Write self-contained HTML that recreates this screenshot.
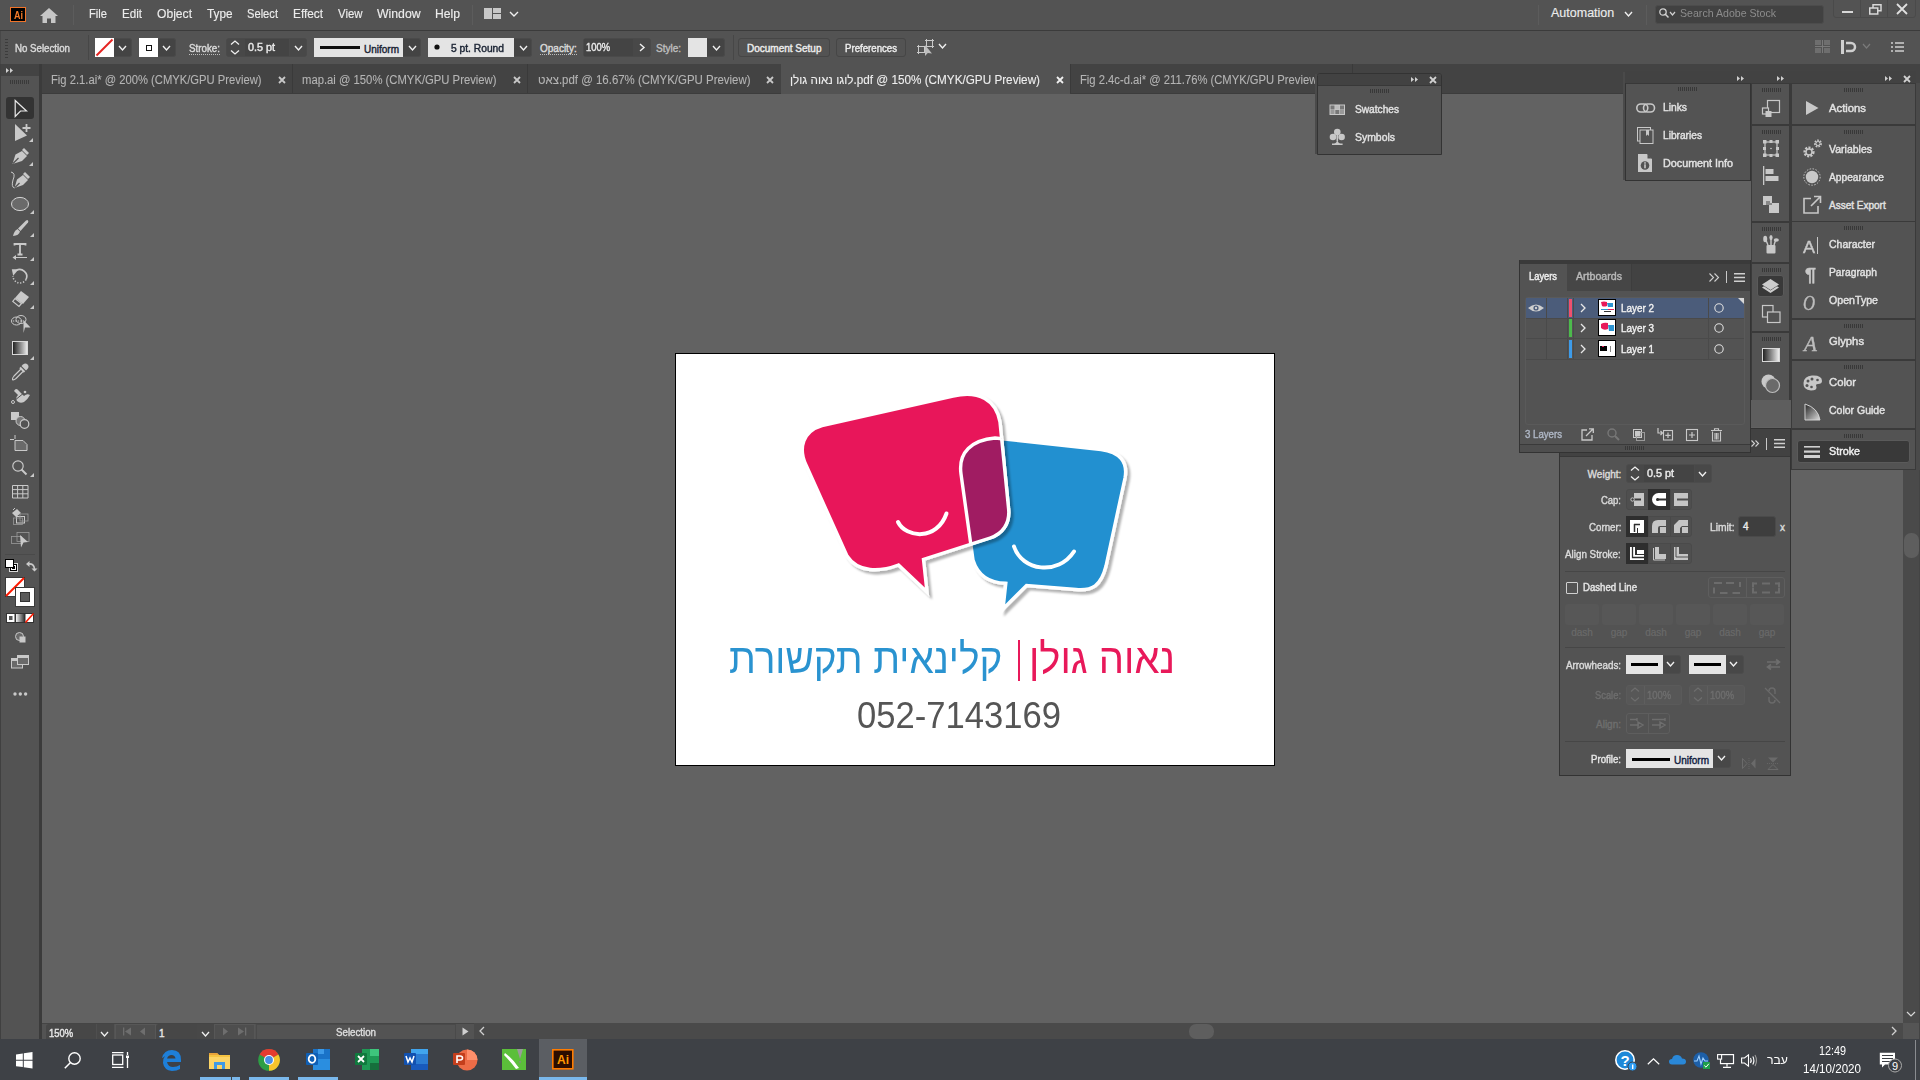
<!DOCTYPE html>
<html><head><meta charset="utf-8">
<style>
*{margin:0;padding:0;box-sizing:border-box}
html,body{width:1920px;height:1080px;overflow:hidden;background:#626262;font-family:"Liberation Sans",sans-serif;position:relative}
.a{position:absolute}
.t{position:absolute;white-space:nowrap;line-height:1;-webkit-text-stroke:0.4px currentColor}
.nb{-webkit-text-stroke:0}
svg{position:absolute;overflow:visible}
</style></head><body>

<div class="a" style="left:0px;top:0px;width:1920px;height:30px;background:#535353;"></div>
<div class="a" style="left:0px;top:30px;width:1920px;height:1px;background:#3b3b3b;"></div>
<div class="a" style="left:10px;top:7px;width:16px;height:15px;background:#000000;border:1.5px solid #f0742a;"></div>
<div class="t" style="left:13.50px;top:10.54px;font-size:10px;color:#f57c2a;font-weight:700;transform:scaleX(0.9000);transform-origin:0 0;-webkit-text-stroke:0;">Ai</div>
<svg style="left:40px;top:8px;" width="18" height="16" viewBox="0 0 18 16"><path d="M9 0 L18 8 L15.5 8 L15.5 15 L11 15 L11 10.5 L7 10.5 L7 15 L2.5 15 L2.5 8 L0 8 Z" fill="#c6c6c6"/></svg>
<div class="a" style="left:73px;top:5px;width:1px;height:20px;background:#5c5c5c;"></div>
<div class="t" style="left:89.00px;top:7.92px;font-size:12.5px;color:#ececec;font-weight:400;transform:scaleX(0.8937);transform-origin:0 0;-webkit-text-stroke:0.15px currentColor;">File</div>
<div class="t" style="left:122.00px;top:7.92px;font-size:12.5px;color:#ececec;font-weight:400;transform:scaleX(0.9285);transform-origin:0 0;-webkit-text-stroke:0.15px currentColor;">Edit</div>
<div class="t" style="left:157.00px;top:7.92px;font-size:12.5px;color:#ececec;font-weight:400;transform:scaleX(0.9688);transform-origin:0 0;-webkit-text-stroke:0.15px currentColor;">Object</div>
<div class="t" style="left:207.00px;top:7.92px;font-size:12.5px;color:#ececec;font-weight:400;transform:scaleX(0.9410);transform-origin:0 0;-webkit-text-stroke:0.15px currentColor;">Type</div>
<div class="t" style="left:247.00px;top:7.92px;font-size:12.5px;color:#ececec;font-weight:400;transform:scaleX(0.8923);transform-origin:0 0;-webkit-text-stroke:0.15px currentColor;">Select</div>
<div class="t" style="left:293.00px;top:7.92px;font-size:12.5px;color:#ececec;font-weight:400;transform:scaleX(0.9454);transform-origin:0 0;-webkit-text-stroke:0.15px currentColor;">Effect</div>
<div class="t" style="left:338.00px;top:7.92px;font-size:12.5px;color:#ececec;font-weight:400;transform:scaleX(0.9119);transform-origin:0 0;-webkit-text-stroke:0.15px currentColor;">View</div>
<div class="t" style="left:377.00px;top:7.92px;font-size:12.5px;color:#ececec;font-weight:400;transform:scaleX(0.9807);transform-origin:0 0;-webkit-text-stroke:0.15px currentColor;">Window</div>
<div class="t" style="left:435.00px;top:7.92px;font-size:12.5px;color:#ececec;font-weight:400;transform:scaleX(0.9725);transform-origin:0 0;-webkit-text-stroke:0.15px currentColor;">Help</div>
<div class="a" style="left:472px;top:5px;width:1px;height:20px;background:#5c5c5c;"></div>
<svg style="left:484px;top:8px;" width="18" height="12" viewBox="0 0 18 12"><rect x="0" y="0" width="8" height="11" fill="#c8c8c8"/><rect x="9" y="0" width="8" height="5" fill="#c8c8c8"/><rect x="9" y="6" width="8" height="5" fill="#c8c8c8"/></svg>
<svg style="left:508.5px;top:10.5px;" width="10" height="6" viewBox="0 0 10 6"><path d="M1 1 L5.0 5 L9 1" fill="none" stroke="#f0f0f0" stroke-width="1.4"/></svg>
<div class="a" style="left:1538px;top:5px;width:1px;height:20px;background:#5c5c5c;"></div>
<div class="t" style="left:1551.00px;top:7.42px;font-size:12.5px;color:#ececec;font-weight:400;-webkit-text-stroke:0.15px currentColor;">Automation</div>
<svg style="left:1624px;top:11px;" width="9" height="6" viewBox="0 0 9 6"><path d="M1 1 L4.5 5 L8 1" fill="none" stroke="#f0f0f0" stroke-width="1.4"/></svg>
<div class="a" style="left:1646px;top:5px;width:1px;height:20px;background:#5c5c5c;"></div>
<div class="a" style="left:1655px;top:5px;width:169px;height:19px;background:#414141;border:1px solid #4c4c4c;border-radius:3px;"></div>
<svg style="left:1659px;top:8px;" width="10" height="11" viewBox="0 0 10 11"><circle cx="4" cy="4" r="3.2" fill="none" stroke="#d0d0d0" stroke-width="1.3"/><path d="M6.3 6.3 L9.5 9.5" stroke="#d0d0d0" stroke-width="1.5"/></svg>
<svg style="left:1669px;top:11px;" width="7" height="5" viewBox="0 0 7 5"><path d="M1 1 L3.5 4 L6 1" fill="none" stroke="#d0d0d0" stroke-width="1.2"/></svg>
<div class="t" style="left:1680.00px;top:8.27px;font-size:11.5px;color:#8c8c8c;font-weight:400;transform:scaleX(0.9213);transform-origin:0 0;-webkit-text-stroke:0;">Search Adobe Stock</div>
<div class="a" style="left:1833px;top:-2px;width:83px;height:20px;background:#535353;border:1px solid #4a4a4a;border-radius:0 0 3px 3px;"></div>
<div class="a" style="left:1860px;top:0px;width:1px;height:17px;background:#4a4a4a;"></div>
<div class="a" style="left:1887px;top:0px;width:1px;height:17px;background:#4a4a4a;"></div>
<div class="a" style="left:1842px;top:11px;width:11px;height:2px;background:#d8d8d8;"></div>
<svg style="left:1869px;top:4px;" width="13" height="11" viewBox="0 0 13 11"><rect x="4" y="0.75" width="8" height="6" fill="none" stroke="#d8d8d8" stroke-width="1.5"/><rect x="0.75" y="4" width="8" height="6" fill="#535353" stroke="#d8d8d8" stroke-width="1.5"/></svg>
<svg style="left:1897px;top:4px;" width="10" height="10" viewBox="0 0 10 10"><path d="M0 0 L10 10 M10 0 L0 10" stroke="#e0e0e0" stroke-width="1.8"/></svg>
<div class="a" style="left:0px;top:31px;width:1920px;height:33px;background:#535353;"></div>
<div class="a" style="left:0px;top:31px;width:1px;height:33px;background:#484848;"></div>
<div class="a" style="left:5px;top:39px;width:3px;height:1px;background:#3c3c3c;"></div>
<div class="a" style="left:5px;top:42px;width:3px;height:1px;background:#3c3c3c;"></div>
<div class="a" style="left:5px;top:45px;width:3px;height:1px;background:#3c3c3c;"></div>
<div class="a" style="left:5px;top:48px;width:3px;height:1px;background:#3c3c3c;"></div>
<div class="a" style="left:5px;top:51px;width:3px;height:1px;background:#3c3c3c;"></div>
<div class="a" style="left:5px;top:54px;width:3px;height:1px;background:#3c3c3c;"></div>
<div class="a" style="left:5px;top:57px;width:3px;height:1px;background:#3c3c3c;"></div>
<div class="t" style="left:15.00px;top:43.53px;font-size:10px;color:#dadada;font-weight:400;transform:scaleX(0.9701);transform-origin:0 0;">No Selection</div>
<div class="a" style="left:88px;top:35px;width:1px;height:25px;background:#474747;"></div>
<div class="a" style="left:95px;top:38px;width:19px;height:19px;background:#ffffff;"></div>
<svg style="left:95px;top:38px" width="19" height="19"><path d="M1.5 17.5 L17.5 1.5" stroke="#e52421" stroke-width="2"/></svg>
<div class="a" style="left:114px;top:38px;width:18px;height:19px;background:#444444;border-radius:0 3px 3px 0;border:1px solid #4a4a4a;border-left:none;"></div>
<svg style="left:118px;top:44.5px;" width="9" height="6" viewBox="0 0 9 6"><path d="M1 1 L4.5 5 L8 1" fill="none" stroke="#f0f0f0" stroke-width="1.4"/></svg>
<div class="a" style="left:139px;top:38px;width:19px;height:19px;background:#ffffff;"></div>
<div class="a" style="left:146px;top:45px;width:6px;height:6px;border:1.3px solid #111"></div>
<div class="a" style="left:158px;top:38px;width:18px;height:19px;background:#444444;border-radius:0 3px 3px 0;border:1px solid #4a4a4a;border-left:none;"></div>
<svg style="left:162px;top:44.5px;" width="9" height="6" viewBox="0 0 9 6"><path d="M1 1 L4.5 5 L8 1" fill="none" stroke="#f0f0f0" stroke-width="1.4"/></svg>
<div class="t" style="left:189.00px;top:43.53px;font-size:10px;color:#dadada;font-weight:400;transform:scaleX(0.9786);transform-origin:0 0;">Stroke:</div>
<svg style="left:189px;top:54px;" width="31" height="1" viewBox="0 0 31 1"><rect x="0" y="0" width="1" height="1" fill="#bdbdbd"/><rect x="2" y="0" width="1" height="1" fill="#bdbdbd"/><rect x="4" y="0" width="1" height="1" fill="#bdbdbd"/><rect x="6" y="0" width="1" height="1" fill="#bdbdbd"/><rect x="8" y="0" width="1" height="1" fill="#bdbdbd"/><rect x="10" y="0" width="1" height="1" fill="#bdbdbd"/><rect x="12" y="0" width="1" height="1" fill="#bdbdbd"/><rect x="14" y="0" width="1" height="1" fill="#bdbdbd"/><rect x="16" y="0" width="1" height="1" fill="#bdbdbd"/><rect x="18" y="0" width="1" height="1" fill="#bdbdbd"/><rect x="20" y="0" width="1" height="1" fill="#bdbdbd"/><rect x="22" y="0" width="1" height="1" fill="#bdbdbd"/><rect x="24" y="0" width="1" height="1" fill="#bdbdbd"/><rect x="26" y="0" width="1" height="1" fill="#bdbdbd"/><rect x="28" y="0" width="1" height="1" fill="#bdbdbd"/><rect x="30" y="0" width="1" height="1" fill="#bdbdbd"/></svg>
<div class="a" style="left:226px;top:38px;width:81px;height:19px;background:#484848;border:1px solid #4a4a4a;border-radius:3px;"></div>
<svg style="left:230px;top:40px;" width="10" height="15" viewBox="0 0 10 15"><path d="M1 4.5 L5 1 L9 4.5 M1 10.5 L5 14 L9 10.5" fill="none" stroke="#f0f0f0" stroke-width="1.3"/></svg>
<div class="a" style="left:245px;top:39px;width:44px;height:17px;background:#444444;"></div>
<div class="t" style="left:248.00px;top:43.03px;font-size:10px;color:#e8e8e8;font-weight:400;transform:scaleX(1.0793);transform-origin:0 0;">0.5 pt</div>
<div class="a" style="left:289px;top:39px;width:1px;height:17px;background:#4a4a4a;"></div>
<svg style="left:293.5px;top:44.5px;" width="9" height="6" viewBox="0 0 9 6"><path d="M1 1 L4.5 5 L8 1" fill="none" stroke="#f0f0f0" stroke-width="1.4"/></svg>
<div class="a" style="left:314px;top:38px;width:89px;height:19px;background:#e4e4e4;"></div>
<div class="a" style="left:320px;top:46px;width:40px;height:3px;background:#111;"></div>
<div class="t" style="left:364.00px;top:44.53px;font-size:10px;color:#1a2333;font-weight:400;">Uniform</div>
<div class="a" style="left:403px;top:38px;width:18px;height:19px;background:#444444;border:1px solid #4a4a4a;border-left:none;border-radius:0 3px 3px 0;"></div>
<svg style="left:407.5px;top:44.5px;" width="9" height="6" viewBox="0 0 9 6"><path d="M1 1 L4.5 5 L8 1" fill="none" stroke="#f0f0f0" stroke-width="1.4"/></svg>
<div class="a" style="left:428px;top:38px;width:86px;height:19px;background:#e4e4e4;"></div>
<svg style="left:434px;top:44px;" width="6" height="6" viewBox="0 0 6 6"><circle cx="3" cy="3" r="2.6" fill="#111"/></svg>
<div class="t" style="left:451.00px;top:44.03px;font-size:10px;color:#1a2333;font-weight:400;transform:scaleX(1.0251);transform-origin:0 0;">5 pt. Round</div>
<div class="a" style="left:514px;top:38px;width:18px;height:19px;background:#444444;border:1px solid #4a4a4a;border-left:none;border-radius:0 3px 3px 0;"></div>
<svg style="left:518.5px;top:44.5px;" width="9" height="6" viewBox="0 0 9 6"><path d="M1 1 L4.5 5 L8 1" fill="none" stroke="#f0f0f0" stroke-width="1.4"/></svg>
<div class="t" style="left:540.00px;top:43.53px;font-size:10px;color:#dadada;font-weight:400;">Opacity:</div>
<svg style="left:540px;top:54px;" width="37" height="1" viewBox="0 0 37 1"><rect x="0" y="0" width="1" height="1" fill="#bdbdbd"/><rect x="2" y="0" width="1" height="1" fill="#bdbdbd"/><rect x="4" y="0" width="1" height="1" fill="#bdbdbd"/><rect x="6" y="0" width="1" height="1" fill="#bdbdbd"/><rect x="8" y="0" width="1" height="1" fill="#bdbdbd"/><rect x="10" y="0" width="1" height="1" fill="#bdbdbd"/><rect x="12" y="0" width="1" height="1" fill="#bdbdbd"/><rect x="14" y="0" width="1" height="1" fill="#bdbdbd"/><rect x="16" y="0" width="1" height="1" fill="#bdbdbd"/><rect x="18" y="0" width="1" height="1" fill="#bdbdbd"/><rect x="20" y="0" width="1" height="1" fill="#bdbdbd"/><rect x="22" y="0" width="1" height="1" fill="#bdbdbd"/><rect x="24" y="0" width="1" height="1" fill="#bdbdbd"/><rect x="26" y="0" width="1" height="1" fill="#bdbdbd"/><rect x="28" y="0" width="1" height="1" fill="#bdbdbd"/><rect x="30" y="0" width="1" height="1" fill="#bdbdbd"/><rect x="32" y="0" width="1" height="1" fill="#bdbdbd"/><rect x="34" y="0" width="1" height="1" fill="#bdbdbd"/><rect x="36" y="0" width="1" height="1" fill="#bdbdbd"/></svg>
<div class="a" style="left:583px;top:38px;width:68px;height:19px;background:#484848;border:1px solid #4a4a4a;border-radius:3px;"></div>
<div class="a" style="left:584px;top:39px;width:49px;height:17px;background:#444444;"></div>
<div class="t" style="left:586.00px;top:43.03px;font-size:10px;color:#e8e8e8;font-weight:400;transform:scaleX(0.9384);transform-origin:0 0;">100%</div>
<svg style="left:639px;top:43px;" width="6" height="9" viewBox="0 0 6 9"><path d="M1 1 L5 4.5 L1 8" fill="none" stroke="#f0f0f0" stroke-width="1.4"/></svg>
<div class="t" style="left:656.00px;top:43.53px;font-size:10px;color:#bdbdbd;font-weight:400;">Style:</div>
<div class="a" style="left:688px;top:38px;width:19px;height:19px;background:#e4e4e4;"></div>
<div class="a" style="left:707px;top:38px;width:18px;height:19px;background:#444444;border:1px solid #4a4a4a;border-left:none;border-radius:0 3px 3px 0;"></div>
<svg style="left:711.5px;top:44.5px;" width="9" height="6" viewBox="0 0 9 6"><path d="M1 1 L4.5 5 L8 1" fill="none" stroke="#f0f0f0" stroke-width="1.4"/></svg>
<div class="a" style="left:733px;top:35px;width:1px;height:25px;background:#474747;"></div>
<div class="a" style="left:738px;top:38px;width:92px;height:19px;background:#535353;border:1px solid #464646;border-radius:3px;"></div>
<div class="t" style="left:747.00px;top:44.03px;font-size:10px;color:#ececec;font-weight:400;">Document Setup</div>
<div class="a" style="left:836px;top:38px;width:70px;height:19px;background:#535353;border:1px solid #464646;border-radius:3px;"></div>
<div class="t" style="left:845.00px;top:44.03px;font-size:10px;color:#ececec;font-weight:400;transform:scaleX(0.9645);transform-origin:0 0;">Preferences</div>
<svg style="left:917px;top:39px;" width="17" height="17" viewBox="0 0 17 17"><rect x="1.5" y="7.5" width="6" height="6" fill="none" stroke="#c8c8c8" stroke-width="1"/><rect x="9.5" y="1.5" width="6" height="6" fill="none" stroke="#c8c8c8" stroke-width="1"/><path d="M0 7.5 H2 M1.5 6 V8 M0 13.5 H2 M1.5 13 V15 M9.5 0 V2 M8 1.5 H10 M15.5 0 V2 M15 1.5 H17 M15.5 7 V9 M15 7.5 H17" stroke="#c8c8c8" stroke-width="1"/><path d="M8 6 L8 17 L10.8 14 L15 14.5 Z" fill="#bdbdbd"/></svg>
<svg style="left:937.5px;top:43px;" width="9" height="6" viewBox="0 0 9 6"><path d="M1 1 L4.5 5 L8 1" fill="none" stroke="#f0f0f0" stroke-width="1.4"/></svg>
<svg style="left:1815px;top:40px;" width="16" height="13" viewBox="0 0 16 13"><rect x="0" y="0" width="6" height="5" fill="#6e6e6e"/><rect x="9" y="0" width="6" height="5" fill="#6e6e6e"/><rect x="0" y="8" width="6" height="5" fill="#6e6e6e"/><rect x="9" y="8" width="6" height="5" fill="#6e6e6e"/><rect x="7" y="0" width="1" height="13" fill="#7a7a7a"/><rect x="0" y="6" width="15" height="1" fill="#7a7a7a"/></svg>
<svg style="left:1841px;top:40px;" width="16" height="14" viewBox="0 0 16 14"><rect x="0" y="0" width="3" height="14" fill="#cfcfcf"/><path d="M5 3 L10 3 A4 4 0 0 1 10 11 L5 11" fill="none" stroke="#cfcfcf" stroke-width="2.5"/></svg>
<svg style="left:1862px;top:43px;" width="9" height="6" viewBox="0 0 9 6"><path d="M1 1 L4.5 5 L8 1" fill="none" stroke="#7a7a7a" stroke-width="1.2"/></svg>
<svg style="left:1891px;top:42px;" width="13" height="10" viewBox="0 0 13 10"><path d="M0 1 H2 M0 5 H2 M0 9 H2 M4 1 H13 M4 5 H13 M4 9 H13" stroke="#d0d0d0" stroke-width="1.5"/></svg>
<div class="a" style="left:42px;top:64px;width:1878px;height:30px;background:#434343;"></div>
<div class="a" style="left:42px;top:93px;width:1878px;height:1px;background:#3c3c3c;"></div>
<div class="t" style="left:51.00px;top:73.84px;font-size:12px;color:#b4b4b4;font-weight:400;transform:scaleX(0.9359);transform-origin:0 0;-webkit-text-stroke:0.1px currentColor;">Fig 2.1.ai* @ 200% (CMYK/GPU Preview)</div>
<svg style="left:279px;top:77px;" width="6" height="6" viewBox="0 0 6 6"><path d="M0 0 L6 6 M6 0 L0 6" stroke="#c8c8c8" stroke-width="1.8"/></svg>
<div class="a" style="left:292px;top:64px;width:1px;height:29px;background:#3a3a3a;"></div>
<div class="t" style="left:302.00px;top:73.84px;font-size:12px;color:#b4b4b4;font-weight:400;transform:scaleX(0.9400);transform-origin:0 0;-webkit-text-stroke:0.1px currentColor;">map.ai @ 150% (CMYK/GPU Preview)</div>
<svg style="left:514px;top:77px;" width="6" height="6" viewBox="0 0 6 6"><path d="M0 0 L6 6 M6 0 L0 6" stroke="#c8c8c8" stroke-width="1.8"/></svg>
<div class="a" style="left:527px;top:64px;width:1px;height:29px;background:#3a3a3a;"></div>
<div class="t" style="left:537.50px;top:73.84px;font-size:12px;color:#b4b4b4;font-weight:400;transform:scaleX(0.9537);transform-origin:0 0;-webkit-text-stroke:0.1px currentColor;">צאט.pdf @ 16.67% (CMYK/GPU Preview)</div>
<svg style="left:767px;top:77px;" width="6" height="6" viewBox="0 0 6 6"><path d="M0 0 L6 6 M6 0 L0 6" stroke="#c8c8c8" stroke-width="1.8"/></svg>
<div class="a" style="left:781px;top:64px;width:1px;height:29px;background:#3a3a3a;"></div>
<div class="a" style="left:781px;top:64px;width:289px;height:30px;background:#535353;"></div>
<div class="t" style="left:790.00px;top:73.84px;font-size:12px;color:#eeeeee;font-weight:400;transform:scaleX(0.9772);transform-origin:0 0;-webkit-text-stroke:0.1px currentColor;">‎לוגו נאוה גולן.pdf @ 150% (CMYK/GPU Preview)</div>
<svg style="left:1057px;top:77px;" width="6" height="6" viewBox="0 0 6 6"><path d="M0 0 L6 6 M6 0 L0 6" stroke="#f0f0f0" stroke-width="1.8"/></svg>
<div class="a" style="left:1070px;top:64px;width:1px;height:29px;background:#3a3a3a;"></div>
<div class="a" style="left:1070px;top:64px;width:248px;height:29px;overflow:hidden">
<div class="t" style="left:10.00px;top:9.84px;font-size:12px;color:#b4b4b4;font-weight:400;transform:scaleX(0.9363);transform-origin:0 0;-webkit-text-stroke:0.1px currentColor;">Fig 2.4c-d.ai* @ 211.76% (CMYK/GPU Preview)</div>
</div>
<div class="a" style="left:1352px;top:64px;width:1px;height:9px;background:#3a3a3a;"></div>
<div class="a" style="left:0px;top:64px;width:39px;height:975px;background:#535353;"></div>
<div class="a" style="left:0px;top:64px;width:39px;height:12px;background:#434343;"></div>
<div class="a" style="left:0px;top:64px;width:1px;height:975px;background:#404040;"></div>
<svg style="left:6px;top:68px;" width="8" height="5" viewBox="0 0 8 5"><path d="M0 0 L3 2.5 L0 5 Z M4 0 L7 2.5 L4 5 Z" fill="#d0d0d0"/></svg>
<div class="a" style="left:39px;top:64px;width:3px;height:975px;background:#3b3b3b;"></div>
<svg style="left:10px;top:80px;" width="20" height="4" viewBox="0 0 20 4"><rect x="0" y="0" width="1" height="4" fill="#3a3a3a"/><rect x="2" y="0" width="1" height="4" fill="#3a3a3a"/><rect x="4" y="0" width="1" height="4" fill="#3a3a3a"/><rect x="6" y="0" width="1" height="4" fill="#3a3a3a"/><rect x="8" y="0" width="1" height="4" fill="#3a3a3a"/><rect x="10" y="0" width="1" height="4" fill="#3a3a3a"/><rect x="12" y="0" width="1" height="4" fill="#3a3a3a"/><rect x="14" y="0" width="1" height="4" fill="#3a3a3a"/><rect x="16" y="0" width="1" height="4" fill="#3a3a3a"/><rect x="18" y="0" width="1" height="4" fill="#3a3a3a"/></svg>
<div class="a" style="left:6px;top:97px;width:28px;height:22px;background:#333333;border-radius:3px;"></div>
<svg style="left:14px;top:99px;" width="14" height="19" viewBox="0 0 14 19"><path d="M1.2 1.5 L12.5 12 L6.5 12 L1.2 17.5 Z" fill="none" stroke="#e8e8e8" stroke-width="1.2" stroke-linejoin="miter"/></svg>
<svg style="left:14px;top:123px;" width="18" height="19" viewBox="0 0 18 19"><path d="M1 1 L13 12.5 L1 18 Z" fill="#c9c9c9"/><path d="M8.5 5 H16.5 M12.5 1 V9" stroke="#c9c9c9" stroke-width="1.8"/></svg>
<svg style="left:29px;top:138px;" width="4" height="4" viewBox="0 0 4 4"><path d="M4 0 L4 4 L0 4 Z" fill="#c9c9c9"/></svg>
<svg style="left:11px;top:147px;" width="18" height="18" viewBox="0 0 18 18"><path d="M11 4 L16 9 L11 14 L1.5 17 L4.5 7.5 Z" fill="#c9c9c9"/><path d="M13 1 L18 6 L16 8 L11 3 Z" fill="#c9c9c9"/><path d="M2 16.5 L7.5 11" stroke="#535353" stroke-width="1.2"/></svg>
<svg style="left:29px;top:162px;" width="4" height="4" viewBox="0 0 4 4"><path d="M4 0 L4 4 L0 4 Z" fill="#c9c9c9"/></svg>
<svg style="left:10px;top:171px;" width="20" height="19" viewBox="0 0 20 19"><path d="M13 4 L18 9 L13 14 L4.5 17 L7 8.5 Z" fill="#c9c9c9"/><path d="M15 1 L20 6 L18 8 L13 3 Z" fill="#c9c9c9"/><path d="M1 1 Q6 2 3 9 Q1 16 4.5 17" fill="none" stroke="#c9c9c9" stroke-width="1"/><path d="M5 16.5 L9.5 12" stroke="#535353" stroke-width="1.2"/></svg>
<svg style="left:11px;top:197px;" width="19" height="15" viewBox="0 0 19 15"><ellipse cx="9" cy="7" rx="8.5" ry="6.6" fill="#6a6a6a" stroke="#d4d4d4" stroke-width="1"/></svg>
<svg style="left:29.5px;top:210px;" width="4" height="4" viewBox="0 0 4 4"><path d="M4 0 L4 4 L0 4 Z" fill="#c9c9c9"/></svg>
<svg style="left:12px;top:219px;" width="17" height="18" viewBox="0 0 17 18"><path d="M15.5 1 Q17 2 16 3.5 L8.5 12 L6 9.5 L14 1.5 Z" fill="#c9c9c9"/><path d="M5.5 10 L8 12.5 Q7 16.5 1 17 Q2 12 5.5 10 Z" fill="#c9c9c9"/></svg>
<svg style="left:29.5px;top:233px;" width="4" height="4" viewBox="0 0 4 4"><path d="M4 0 L4 4 L0 4 Z" fill="#c9c9c9"/></svg>
<svg style="left:12px;top:243px;" width="16" height="16" viewBox="0 0 16 16"><path d="M2.5 2.5 V1 H13.5 V2.5 M8 1 V11.5 M5.5 11.5 H10.5" fill="none" stroke="#c9c9c9" stroke-width="1.8"/><path d="M4 14.5 H15" stroke="#c9c9c9" stroke-width="1"/><path d="M0.5 14.5 L4 12 L4 17 Z" fill="#c9c9c9"/></svg>
<svg style="left:29.5px;top:257px;" width="4" height="4" viewBox="0 0 4 4"><path d="M4 0 L4 4 L0 4 Z" fill="#c9c9c9"/></svg>
<svg style="left:10px;top:266px;" width="20" height="20" viewBox="0 0 20 20"><path d="M6 4.6 A7 7 0 0 1 16.06 13.5" fill="none" stroke="#c9c9c9" stroke-width="1.7"/><path d="M16.06 13.5 A7 7 0 0 1 3 10" fill="none" stroke="#c9c9c9" stroke-width="1.5" stroke-dasharray="1.3 1.6"/><path d="M1.8 3.2 L8.6 3.2 L3.2 9.8 Z" fill="#c9c9c9"/></svg>
<svg style="left:29.5px;top:281px;" width="4" height="4" viewBox="0 0 4 4"><path d="M4 0 L4 4 L0 4 Z" fill="#c9c9c9"/></svg>
<svg style="left:12px;top:290px;" width="18" height="17" viewBox="0 0 18 17"><path d="M9 1 L17 7 L11 14 L3 8 Z" fill="#c9c9c9"/><path d="M3 8.5 L9.5 13.5 L7 16.5 L0.8 11.5 Z" fill="none" stroke="#c9c9c9" stroke-width="1.2"/></svg>
<svg style="left:29.5px;top:305px;" width="4" height="4" viewBox="0 0 4 4"><path d="M4 0 L4 4 L0 4 Z" fill="#c9c9c9"/></svg>
<svg style="left:11px;top:315px;" width="21" height="18" viewBox="0 0 21 18"><ellipse cx="5.5" cy="6" rx="5" ry="4" fill="none" stroke="#c9c9c9" stroke-width="1"/><ellipse cx="10" cy="4.5" rx="5" ry="4" fill="none" stroke="#c9c9c9" stroke-width="1"/><path d="M2 6 H13" stroke="#c9c9c9" stroke-width="1.2" stroke-dasharray="1.2 1.2"/><path d="M12.5 5 L19.5 12.5 L14 12.5 L12.5 18 Z" fill="#c9c9c9"/></svg>
<div class="a" style="left:12px;top:341px;width:16px;height:14px;border:1px solid #d8d8d8;background:linear-gradient(90deg,#222,#e8e8e8)"></div>
<svg style="left:29.5px;top:356px;" width="4" height="4" viewBox="0 0 4 4"><path d="M4 0 L4 4 L0 4 Z" fill="#c9c9c9"/></svg>
<svg style="left:11px;top:363px;" width="18" height="18" viewBox="0 0 18 18"><path d="M12 1.5 Q14.5 -0.5 16.5 1.5 Q18.5 3.5 16.5 6 L15 7.5 L10.5 3 Z" fill="#c9c9c9"/><path d="M9 4.5 L13.5 9" stroke="#c9c9c9" stroke-width="2"/><path d="M10 6 L3 13 Q1 15.5 1.5 16.5 Q2.5 17.5 5 15.5 L12 8.5" fill="none" stroke="#c9c9c9" stroke-width="1.2"/></svg>
<svg style="left:11px;top:388px;" width="20" height="16" viewBox="0 0 20 16"><path d="M3 3 Q5 -1 8 3 L13 8 Q16 5 19 7 Q17 11 13 14 Q9 16 6 13 Q4 10 7 7 Q5 5 3 3 Z" fill="#c9c9c9"/><circle cx="2" cy="14" r="1.5" fill="none" stroke="#c9c9c9"/><path d="M3 13 L14 4" stroke="#535353" stroke-width="1"/><circle cx="14" cy="4" r="1.3" fill="#c9c9c9"/></svg>
<svg style="left:11px;top:412px;" width="19" height="16" viewBox="0 0 19 16"><rect x="0" y="0" width="8" height="8" fill="#c9c9c9"/><circle cx="9.5" cy="9" r="4.5" fill="#777" stroke="#c9c9c9" stroke-width="1"/><circle cx="13.5" cy="12" r="4.3" fill="#535353" stroke="#c9c9c9" stroke-width="1.2"/></svg>
<svg style="left:10px;top:435px;" width="18" height="16" viewBox="0 0 18 16"><path d="M5 0 V4 M0 4.5 H4" stroke="#c9c9c9" stroke-width="1"/><path d="M5 5.5 H13 L17 9.5 V15.5 H5 Z" fill="#6a6a6a" stroke="#c9c9c9" stroke-width="1"/></svg>
<svg style="left:12px;top:460px;" width="19" height="17" viewBox="0 0 19 17"><circle cx="6" cy="6" r="5.2" fill="none" stroke="#c9c9c9" stroke-width="1.2"/><path d="M9.5 9.5 L14.5 14.5" stroke="#c9c9c9" stroke-width="2"/></svg>
<svg style="left:29.5px;top:473px;" width="4" height="4" viewBox="0 0 4 4"><path d="M4 0 L4 4 L0 4 Z" fill="#c9c9c9"/></svg>
<svg style="left:12px;top:485px;" width="17" height="14" viewBox="0 0 17 14"><path d="M0.5 0.5 H16 V13 H0.5 Z M0.5 4.6 H16 M0.5 8.8 H16 M5.6 0.5 V13 M10.8 0.5 V13" fill="none" stroke="#c9c9c9" stroke-width="1"/></svg>
<svg style="left:11px;top:508px;" width="19" height="17" viewBox="0 0 19 17"><path d="M1 5 L6 1 L10 5 L5 9 Z" fill="#c9c9c9"/><path d="M2 2 L4 0" stroke="#c9c9c9" stroke-width="1"/><rect x="5.5" y="8.5" width="8" height="6.5" fill="none" stroke="#c9c9c9" stroke-width="1"/><rect x="9" y="6" width="8" height="7" fill="none" stroke="#9a9a9a" stroke-width="0.8"/><rect x="2.5" y="10" width="9" height="6.5" fill="none" stroke="#9a9a9a" stroke-width="0.8"/></svg>
<svg style="left:11px;top:532px;" width="19" height="17" viewBox="0 0 19 17"><rect x="0.5" y="4.5" width="10" height="7" fill="none" stroke="#9a9a9a" stroke-width="0.8"/><rect x="6" y="0.5" width="12" height="9" fill="none" stroke="#9a9a9a" stroke-width="0.8"/><path d="M9 3 L17 10 L12.5 10.5 L10 15.5 Z" fill="#c9c9c9"/></svg>
<div class="a" style="left:5px;top:554px;width:30px;height:1px;background:#4a4a4a;"></div>
<svg style="left:5px;top:559px;" width="13" height="13" viewBox="0 0 13 13"><rect x="4.5" y="4.5" width="8" height="8" fill="#000" stroke="#d8d8d8" stroke-width="1"/><rect x="6.5" y="6.5" width="4" height="4" fill="none" stroke="#fff" stroke-width="1"/><rect x="0.5" y="0.5" width="8" height="8" fill="#fff" stroke="#000" stroke-width="1"/></svg>
<svg style="left:26px;top:560px;" width="12" height="12" viewBox="0 0 12 12"><path d="M2 4 Q8 3 8.5 9" fill="none" stroke="#c9c9c9" stroke-width="1.6"/><path d="M0 4 L3.5 1 L3.5 7 Z M5.5 8.5 L11.5 8.5 L8.5 11.5 Z" fill="#c9c9c9"/></svg>
<svg style="left:5px;top:577px;" width="20" height="20" viewBox="0 0 20 20"><rect x="0.5" y="0.5" width="19" height="19" fill="#fff" stroke="#3a3a3a"/><path d="M1 19 L19 1" stroke="#ff1a00" stroke-width="2"/></svg>
<svg style="left:15px;top:587px;" width="20" height="20" viewBox="0 0 20 20"><rect x="0.5" y="0.5" width="19" height="19" fill="#fff" stroke="#3a3a3a"/><rect x="5.5" y="5.5" width="9" height="9" fill="#5a5a5a" stroke="#333"/></svg>
<svg style="left:6px;top:613px;" width="28" height="10" viewBox="0 0 28 10"><rect x="0.5" y="0.5" width="8.5" height="9" fill="#fff" stroke="#333"/><rect x="3" y="3" width="3.5" height="4" fill="#555"/><defs><linearGradient id="g1"><stop offset="0" stop-color="#fff"/><stop offset="1" stop-color="#333"/></linearGradient></defs><rect x="9.5" y="0.5" width="9" height="9" fill="url(#g1)" stroke="#333"/><rect x="19" y="0.5" width="8.5" height="9" fill="#fff" stroke="#333"/><path d="M19.5 9.5 L27.5 0.5" stroke="#ff1a00" stroke-width="1.6"/></svg>
<svg style="left:15px;top:632px;" width="11" height="11" viewBox="0 0 11 11"><circle cx="4.5" cy="4.5" r="4" fill="#6a6a6a" stroke="#c9c9c9" stroke-width="1"/><rect x="4.5" y="4.5" width="6" height="6" fill="#c9c9c9"/></svg>
<svg style="left:11px;top:655px;" width="18" height="14" viewBox="0 0 18 14"><rect x="0.5" y="3.5" width="11" height="9.5" fill="#6a6a6a" stroke="#c9c9c9" stroke-width="1"/><rect x="0.5" y="3.5" width="11" height="2.5" fill="#c9c9c9"/><rect x="6.5" y="0.5" width="11" height="9" fill="#6a6a6a" stroke="#c9c9c9" stroke-width="1"/><rect x="6.5" y="0.5" width="11" height="2.5" fill="#c9c9c9"/></svg>
<svg style="left:13px;top:692px;" width="15" height="4" viewBox="0 0 15 4"><circle cx="2" cy="2" r="1.7" fill="#c9c9c9"/><circle cx="7.3" cy="2" r="1.7" fill="#c9c9c9"/><circle cx="12.6" cy="2" r="1.7" fill="#c9c9c9"/></svg>
<div class="a" style="left:675px;top:353px;width:600px;height:413px;background:#ffffff;border:1px solid #000;"></div>
<svg style="left:0;top:0" width="1920" height="1080" viewBox="0 0 1920 1080">
<defs>
<filter id="sh" x="-20%" y="-20%" width="140%" height="140%"><feDropShadow dx="3" dy="3" stdDeviation="1" flood-color="#000" flood-opacity="0.3"/></filter>
<clipPath id="cpP"><path d="M822,425.5 L953,396 C979,390 996,400 1000,422 L1008.5,508 C1010.5,524 1002,534 990,538 L923.5,559.5 L927,592 L898.5,565 C880,572 858,573 847,556 L806,465 C798,448 803,431 822,425.5 Z"/></clipPath>
<clipPath id="cpB"><path d="M995,438 L1101,449.5 C1120,452 1128,462 1125,478 L1106,566 C1101,586 1092,591 1076,589.5 L1026.5,585.5 L1003,609 L1005.8,583.3 C990,583 978,576 973,560 L961,474 C958,452 972,440 995,438 Z"/></clipPath>
</defs>
<path d="M995,438 L1101,449.5 C1120,452 1128,462 1125,478 L1106,566 C1101,586 1092,591 1076,589.5 L1026.5,585.5 L1003,609 L1005.8,583.3 C990,583 978,576 973,560 L961,474 C958,452 972,440 995,438 Z" fill="#2190d0" stroke="#fff" stroke-width="3.4" filter="url(#sh)"/>
<path d="M822,425.5 L953,396 C979,390 996,400 1000,422 L1008.5,508 C1010.5,524 1002,534 990,538 L923.5,559.5 L927,592 L898.5,565 C880,572 858,573 847,556 L806,465 C798,448 803,431 822,425.5 Z" fill="#e8195a" stroke="#fff" stroke-width="3.4" filter="url(#sh)"/>
<path d="M995,438 L1101,449.5 C1120,452 1128,462 1125,478 L1106,566 C1101,586 1092,591 1076,589.5 L1026.5,585.5 L1003,609 L1005.8,583.3 C990,583 978,576 973,560 L961,474 C958,452 972,440 995,438 Z" fill="#a01c62" clip-path="url(#cpP)"/>
<path d="M995,438 L1101,449.5 C1120,452 1128,462 1125,478 L1106,566 C1101,586 1092,591 1076,589.5 L1026.5,585.5 L1003,609 L1005.8,583.3 C990,583 978,576 973,560 L961,474 C958,452 972,440 995,438 Z" fill="none" stroke="#fff" stroke-width="3.4" clip-path="url(#cpP)"/>
<path d="M822,425.5 L953,396 C979,390 996,400 1000,422 L1008.5,508 C1010.5,524 1002,534 990,538 L923.5,559.5 L927,592 L898.5,565 C880,572 858,573 847,556 L806,465 C798,448 803,431 822,425.5 Z" fill="none" stroke="#fff" stroke-width="3.4" clip-path="url(#cpB)"/>
<path d="M898,522 C906,538 937,541 946.5,513.5" fill="none" stroke="#fff" stroke-width="4" stroke-linecap="round"/>
<path d="M1014,546.5 C1022,571 1058,576 1074,551.5" fill="none" stroke="#fff" stroke-width="4" stroke-linecap="round"/>
</svg>
<div class="t" dir="rtl" style="left:728.60px;top:638.36px;font-size:42.1px;color:#2a93d0;font-weight:400;transform:scaleX(0.9210);transform-origin:0 0;-webkit-text-stroke:0;">קלינאית תקשורת</div>
<div class="a" style="left:1017.5px;top:640px;width:2.2px;height:41px;background:#e8195a;"></div>
<div class="t" dir="rtl" style="left:1028.50px;top:638.36px;font-size:42.1px;color:#e8195a;font-weight:400;transform:scaleX(0.9474);transform-origin:0 0;-webkit-text-stroke:0;">נאוה גולן</div>
<div class="t" style="left:857.00px;top:697.13px;font-size:37.3px;color:#555555;font-weight:400;transform:scaleX(0.9279);transform-origin:0 0;-webkit-text-stroke:0;">052-7143169</div>
<div class="a" style="left:1903px;top:94px;width:16px;height:929px;background:#4a4a4a;"></div>
<div class="a" style="left:1919px;top:94px;width:1px;height:945px;background:#444444;"></div>
<div class="a" style="left:1904px;top:533px;width:15px;height:25px;background:#5e5e5e;border-radius:7px;"></div>
<svg style="left:1906px;top:1011px;" width="10" height="6" viewBox="0 0 10 6"><path d="M1 1 L5.0 5 L9 1" fill="none" stroke="#d8d8d8" stroke-width="1.2"/></svg>
<div class="a" style="left:42px;top:1023px;width:1861px;height:16px;background:#4a4a4a;"></div>
<div class="a" style="left:42px;top:1023px;width:432px;height:16px;background:#535353;"></div>
<div class="a" style="left:42px;top:1023px;width:432px;height:1px;background:#454545;"></div>
<div class="a" style="left:46px;top:1024px;width:50px;height:15px;background:#474747;border-radius:3px 0 0 0;"></div>
<div class="t" style="left:49.00px;top:1028.54px;font-size:10px;color:#e6e6e6;font-weight:400;transform:scaleX(0.9384);transform-origin:0 0;">150%</div>
<div class="a" style="left:96px;top:1024px;width:18px;height:15px;background:#484848;border-left:1px solid #4f4f4f;"></div>
<svg style="left:100px;top:1030.5px;" width="9" height="6" viewBox="0 0 9 6"><path d="M1 1 L4.5 5 L8 1" fill="none" stroke="#f0f0f0" stroke-width="1.3"/></svg>
<div class="a" style="left:115px;top:1024px;width:41px;height:15px;background:#4e4e4e;border:1px solid #575757;border-bottom:none;"></div>
<svg style="left:123px;top:1027px;" width="24" height="9" viewBox="0 0 24 9"><rect x="0" y="0.5" width="1.3" height="8" fill="#6e6e6e"/><path d="M8 0.5 L2 4.5 L8 8.5 Z M22 0.5 L17 4.5 L22 8.5 Z" fill="#6e6e6e"/></svg>
<div class="a" style="left:156px;top:1024px;width:41px;height:15px;background:#474747;border-radius:3px 0 0 0;"></div>
<div class="t" style="left:159.00px;top:1028.54px;font-size:10px;color:#e6e6e6;font-weight:400;">1</div>
<div class="a" style="left:197px;top:1024px;width:17px;height:15px;background:#484848;"></div>
<svg style="left:200.5px;top:1030.5px;" width="9" height="6" viewBox="0 0 9 6"><path d="M1 1 L4.5 5 L8 1" fill="none" stroke="#f0f0f0" stroke-width="1.3"/></svg>
<div class="a" style="left:214px;top:1024px;width:41px;height:15px;background:#4e4e4e;border:1px solid #575757;border-bottom:none;"></div>
<svg style="left:223px;top:1027px;" width="25" height="9" viewBox="0 0 25 9"><path d="M0 0.5 L5 4.5 L0 8.5 Z M15 0.5 L21 4.5 L15 8.5 Z" fill="#6e6e6e"/><rect x="22" y="0.5" width="1.3" height="8" fill="#6e6e6e"/></svg>
<div class="a" style="left:256px;top:1024px;width:200px;height:15px;background:#535353;border:1px solid #4a4a4a;border-bottom:none;"></div>
<div class="t" style="left:336.00px;top:1028.04px;font-size:10px;color:#dcdcdc;font-weight:400;transform:scaleX(0.9724);transform-origin:0 0;">Selection</div>
<div class="a" style="left:456px;top:1024px;width:18px;height:15px;background:#535353;"></div>
<svg style="left:462px;top:1027px;" width="7" height="9" viewBox="0 0 7 9"><path d="M0.5 0.5 L6.5 4.5 L0.5 8.5 Z" fill="#d0d0d0"/></svg>
<svg style="left:479px;top:1026px;" width="6" height="10" viewBox="0 0 6 10"><path d="M5 1 L1 5.0 L5 9" fill="none" stroke="#d0d0d0" stroke-width="1.3"/></svg>
<div class="a" style="left:1189px;top:1024px;width:25px;height:15px;background:#5e5e5e;border-radius:7px;"></div>
<svg style="left:1891px;top:1026px;" width="6" height="10" viewBox="0 0 6 10"><path d="M1 1 L5 5.0 L1 9" fill="none" stroke="#d0d0d0" stroke-width="1.3"/></svg>
<div class="a" style="left:1903px;top:1023px;width:16px;height:16px;background:#555555;"></div>
<div class="a" style="left:0px;top:1039px;width:1920px;height:41px;background:#3e4146;"></div>
<svg style="left:16px;top:1052px;" width="17" height="17" viewBox="0 0 17 17"><path d="M0 2.4 L6.8 1.5 V7.8 H0 Z M7.8 1.3 L16.5 0 V7.8 H7.8 Z M0 8.8 H6.8 V15.1 L0 14.2 Z M7.8 8.8 H16.5 V16.6 L7.8 15.3 Z" fill="#ffffff"/></svg>
<svg style="left:64px;top:1052px;" width="17" height="17" viewBox="0 0 17 17"><circle cx="10.5" cy="6.5" r="5.7" fill="none" stroke="#fff" stroke-width="1.4"/><path d="M6.5 10.5 L0.8 16.2" stroke="#fff" stroke-width="1.5"/></svg>
<svg style="left:112px;top:1052px;" width="17" height="16" viewBox="0 0 17 16"><rect x="0.7" y="3" width="10" height="9.5" fill="none" stroke="#fff" stroke-width="1.3"/><path d="M0 0.7 H11.5 M0 15.3 H11.5 M15.5 0 V3 M15.5 6 V16" stroke="#fff" stroke-width="1.3"/><rect x="14" y="3.5" width="3" height="2.5" fill="#fff"/></svg>
<svg style="left:161px;top:1049px;" width="21" height="22" viewBox="0 0 21 22"><path d="M1 9 Q3 1 11 1 Q20 1 20 11 V13 H6 Q7 18 12 18 Q16 18 19 16 V20 Q16 22 11 22 Q3 21 2 14 Q1.5 10 4 7 Q2 9 1 9 Z" fill="#1e7fd8"/><path d="M6 9.5 Q7 6 10.5 6 Q14 6 14.5 9.5 Z" fill="#3b3e43"/></svg>
<svg style="left:209px;top:1051px;" width="22" height="19" viewBox="0 0 22 19"><path d="M0 2 H8 L10 4 H21 V18 H0 Z" fill="#f5c342"/><path d="M0 2 H8 L10 4 H0 Z" fill="#e8a33a"/><rect x="0" y="6" width="21" height="12" fill="#fcd466"/><path d="M5 11 H16 V18 H13 V14 H8 V18 H5 Z" fill="#3f9ae6"/></svg>
<svg style="left:258px;top:1049px;" width="22" height="22" viewBox="0 0 22 22"><circle cx="11" cy="11" r="10.8" fill="#2d9e44"/><path d="M11 11 L1.6 5.6 A10.8 10.8 0 0 1 20.4 5.6 Z" fill="#e53b30"/><path d="M11 11 L20.4 5.6 A10.8 10.8 0 0 1 11 21.8 Z" fill="#f7c42c"/><circle cx="11" cy="11" r="5" fill="#fff"/><circle cx="11" cy="11" r="3.9" fill="#4a8ee6"/></svg>
<svg style="left:306px;top:1049px;" width="25" height="22" viewBox="0 0 25 22"><rect x="7" y="0" width="17" height="10" fill="#1a73c8"/><rect x="12" y="0" width="6" height="5" fill="#3d9ae8"/><path d="M7 10 H24 V21 H7 Z" fill="#2a8ee0"/><rect x="0" y="4" width="12" height="12" rx="1" fill="#0f5fb5"/><ellipse cx="6" cy="10" rx="3.3" ry="3.8" fill="none" stroke="#fff" stroke-width="1.8"/></svg>
<svg style="left:355px;top:1049px;" width="25" height="22" viewBox="0 0 25 22"><rect x="7" y="0" width="17" height="21" fill="#1e9a55"/><rect x="15" y="0" width="9" height="7" fill="#3ec57c"/><rect x="15" y="14" width="9" height="7" fill="#166f3c"/><rect x="0" y="4" width="12" height="12" rx="1" fill="#107a3e"/><path d="M3 7 L9 13 M9 7 L3 13" stroke="#fff" stroke-width="1.8"/></svg>
<svg style="left:404px;top:1049px;" width="25" height="22" viewBox="0 0 25 22"><rect x="7" y="0" width="17" height="21" fill="#2b7cd3"/><rect x="7" y="0" width="17" height="5" fill="#41a5ee"/><rect x="7" y="15" width="17" height="6" fill="#185abd"/><rect x="0" y="4" width="12" height="12" rx="1" fill="#1251b0"/><path d="M2 7 L4 13 L6 9 L8 13 L10 7" fill="none" stroke="#fff" stroke-width="1.5"/></svg>
<svg style="left:453px;top:1049px;" width="25" height="22" viewBox="0 0 25 22"><circle cx="14" cy="11" r="10.5" fill="#ed6c47"/><path d="M14 0.5 A10.5 10.5 0 0 1 24.5 11 H14 Z" fill="#ff8f6b"/><rect x="0" y="4" width="12" height="12" rx="1" fill="#c43e1c"/><path d="M4 14 V7 H7 Q9.5 7 9.5 9 Q9.5 11 7 11 H4" fill="none" stroke="#fff" stroke-width="1.6"/></svg>
<svg style="left:502px;top:1049px;" width="25" height="22" viewBox="0 0 25 22"><rect x="0" y="0" width="24" height="21" fill="#5bbf3a"/><path d="M3 4 Q10 9 17 19 L14 20 Q8 12 2 6 Z" fill="#fff"/><path d="M15 0 L18 10 L21 0 Z" fill="#9a9a9a"/><path d="M17 12 L19 12 L18 15 Z" fill="#888"/></svg>
<div class="a" style="left:539px;top:1039px;width:48px;height:41px;background:#5b5e63;"></div>
<svg style="left:552px;top:1049px;" width="22" height="21" viewBox="0 0 22 21"><rect x="0.8" y="0.8" width="20" height="19" fill="#2b0d00" stroke="#ff7c00" stroke-width="1.6"/><text x="11" y="15" font-family="Liberation Sans" font-weight="700" font-size="12" fill="#ff9a00" text-anchor="middle">Ai</text></svg>
<div class="a" style="left:200px;top:1077px;width:31px;height:3px;background:#7ab8ec;"></div>
<div class="a" style="left:232px;top:1077px;width:8px;height:3px;background:#7ab8ec;"></div>
<div class="a" style="left:249px;top:1077px;width:40px;height:3px;background:#7ab8ec;"></div>
<div class="a" style="left:298px;top:1077px;width:40px;height:3px;background:#7ab8ec;"></div>
<div class="a" style="left:539px;top:1077px;width:48px;height:3px;background:#7ab8ec;"></div>
<svg style="left:1615px;top:1050px;" width="23" height="21" viewBox="0 0 23 21"><circle cx="10" cy="10" r="9.2" fill="#1e88d8" stroke="#fff" stroke-width="1.6"/><text x="10" y="15.5" font-family="Liberation Sans" font-weight="700" font-size="15" fill="#fff" text-anchor="middle">?</text><circle cx="17.5" cy="16.5" r="4.5" fill="#2c9af0" stroke="#3b3e43" stroke-width="1"/><rect x="17" y="14.5" width="1.4" height="4.5" fill="#fff"/></svg>
<svg style="left:1647px;top:1058px;" width="13" height="7" viewBox="0 0 13 7"><path d="M0.8 6.2 L6.5 0.8 L12.2 6.2" fill="none" stroke="#fff" stroke-width="1.2"/></svg>
<svg style="left:1669px;top:1054px;" width="17" height="11" viewBox="0 0 17 11"><path d="M3 10.5 Q0 10.5 0 7.5 Q0 5 3 5 Q4 1 8 1 Q12 1 13 4.5 Q17 4.5 17 7.5 Q17 10.5 14 10.5 Z" fill="#2a88d8"/></svg>
<svg style="left:1693px;top:1052px;" width="17" height="17" viewBox="0 0 17 17"><circle cx="8" cy="8" r="7.8" fill="#1d5fa8"/><path d="M1 9 L4 9 L6 4 L8 12 L10 6 L12 9 L15 9" fill="none" stroke="#9fd0ff" stroke-width="1.1"/><rect x="10" y="10" width="7" height="7" fill="#1f9e4a"/><path d="M11.3 13.5 L13 15.2 L15.8 11.8" fill="none" stroke="#fff" stroke-width="1"/></svg>
<svg style="left:1717px;top:1054px;" width="17" height="14" viewBox="0 0 17 14"><rect x="3.5" y="0.6" width="13" height="9" fill="none" stroke="#fff" stroke-width="1.2"/><path d="M10 9.6 V12.5 M6 13.3 H14" stroke="#fff" stroke-width="1.2"/><rect x="0.6" y="0.6" width="4" height="4.5" fill="#3b3e43" stroke="#fff" stroke-width="1.1"/></svg>
<svg style="left:1741px;top:1054px;" width="17" height="13" viewBox="0 0 17 13"><path d="M0.6 4 H3.5 L7.5 0.8 V12.2 L3.5 9 H0.6 Z" fill="none" stroke="#fff" stroke-width="1.1"/><path d="M9.5 4 Q11 6.5 9.5 9 M11.8 2.5 Q14 6.5 11.8 10.5" fill="none" stroke="#fff" stroke-width="1.1"/><path d="M14 1 Q17 6.5 14 12" fill="none" stroke="#9a9a9a" stroke-width="1.1"/></svg>
<div class="t" dir="rtl" style="left:1767.00px;top:1053.84px;font-size:12px;color:#ffffff;font-weight:400;transform:scaleX(1.0207);transform-origin:0 0;-webkit-text-stroke:0;">עבר</div>
<div class="t" style="left:1818.50px;top:1044.84px;font-size:12px;color:#ffffff;font-weight:400;transform:scaleX(0.8992);transform-origin:0 0;-webkit-text-stroke:0;">12:49</div>
<div class="t" style="left:1803.00px;top:1062.84px;font-size:12px;color:#ffffff;font-weight:400;transform:scaleX(0.9658);transform-origin:0 0;-webkit-text-stroke:0;">14/10/2020</div>
<svg style="left:1879px;top:1052px;" width="25" height="21" viewBox="0 0 25 21"><path d="M0.8 0.8 H16 V12.5 H6 L3 15.5 V12.5 H0.8 Z" fill="#fff"/><path d="M3 3.5 H14 M3 6.5 H14 M3 9.5 H11" stroke="#3b3e43" stroke-width="1.2"/><circle cx="16" cy="13.5" r="6.5" fill="#3b3e43" stroke="#aaa" stroke-width="1"/><text x="16" y="17.8" font-family="Liberation Sans" font-size="11" fill="#fff" text-anchor="middle">9</text></svg>
<div class="a" style="left:1915px;top:1040px;width:1px;height:40px;background:#8a8c90;"></div>
<div class="a" style="left:1315px;top:74px;width:2px;height:80px;background:#4a4a4a;"></div>
<div class="a" style="left:1317px;top:73px;width:125px;height:82px;background:#535353;border:1px solid #333333;border-radius:3px 3px 0 0;"></div>
<div class="a" style="left:1318px;top:74px;width:123px;height:12px;background:#424242;border-radius:2px 2px 0 0;"></div>
<div class="a" style="left:1318px;top:85px;width:123px;height:1px;background:#383838;"></div>
<svg style="left:1411px;top:77px;" width="8" height="5" viewBox="0 0 8 5"><path d="M0 0 L3 2.5 L0 5 Z M4 0 L7 2.5 L4 5 Z" fill="#d0d0d0"/></svg>
<svg style="left:1430px;top:77px;" width="6" height="6" viewBox="0 0 6 6"><path d="M0 0 L6 6 M6 0 L0 6" stroke="#d0d0d0" stroke-width="1.8"/></svg>
<svg style="left:1370px;top:89px;" width="20" height="4" viewBox="0 0 20 4"><rect x="0" y="0" width="1" height="4" fill="#383838"/><rect x="2" y="0" width="1" height="4" fill="#383838"/><rect x="4" y="0" width="1" height="4" fill="#383838"/><rect x="6" y="0" width="1" height="4" fill="#383838"/><rect x="8" y="0" width="1" height="4" fill="#383838"/><rect x="10" y="0" width="1" height="4" fill="#383838"/><rect x="12" y="0" width="1" height="4" fill="#383838"/><rect x="14" y="0" width="1" height="4" fill="#383838"/><rect x="16" y="0" width="1" height="4" fill="#383838"/><rect x="18" y="0" width="1" height="4" fill="#383838"/></svg>
<svg style="left:1329px;top:104px;" width="17" height="12" viewBox="0 0 17 12"><rect x="0.5" y="0.5" width="15.5" height="10.5" fill="#c8c8c8"/><rect x="1.5" y="1.5" width="4" height="4" fill="#777"/><rect x="11" y="1.5" width="4" height="4" fill="#777"/><rect x="6.3" y="6" width="4" height="4" fill="#777"/><rect x="1.5" y="6" width="4" height="4" fill="#999"/><rect x="11" y="6" width="4" height="4" fill="#999"/><rect x="6.3" y="1.5" width="4" height="4" fill="#bbb"/></svg>
<div class="t" style="left:1355.00px;top:104.53px;font-size:10px;color:#e2e2e2;font-weight:400;transform:scaleX(1.0149);transform-origin:0 0;">Swatches</div>
<svg style="left:1329px;top:128px;" width="17" height="18" viewBox="0 0 17 18"><circle cx="8.3" cy="4" r="3.3" fill="#c8c8c8"/><circle cx="4" cy="9" r="3.3" fill="#c8c8c8"/><circle cx="12.6" cy="9" r="3.3" fill="#c8c8c8"/><path d="M8.3 7 L8.3 13 M3 16.3 H13.6" stroke="#c8c8c8" stroke-width="1.6"/><path d="M8.3 11 Q8 15 5 16 H11.6 Q8.6 15 8.3 11" fill="#c8c8c8"/></svg>
<div class="t" style="left:1355.00px;top:132.53px;font-size:10px;color:#e2e2e2;font-weight:400;transform:scaleX(1.0432);transform-origin:0 0;">Symbols</div>
<div class="a" style="left:1623px;top:72px;width:2px;height:108px;background:#4a4a4a;"></div>
<div class="a" style="left:1625px;top:71px;width:291px;height:12px;background:#424242;border-radius:3px 3px 0 0;"></div>
<svg style="left:1737px;top:76px;" width="8" height="5" viewBox="0 0 8 5"><path d="M0 0 L3 2.5 L0 5 Z M4 0 L7 2.5 L4 5 Z" fill="#d0d0d0"/></svg>
<svg style="left:1777px;top:76px;" width="8" height="5" viewBox="0 0 8 5"><path d="M0 0 L3 2.5 L0 5 Z M4 0 L7 2.5 L4 5 Z" fill="#d0d0d0"/></svg>
<svg style="left:1885px;top:76px;" width="8" height="5" viewBox="0 0 8 5"><path d="M0 0 L3 2.5 L0 5 Z M4 0 L7 2.5 L4 5 Z" fill="#d0d0d0"/></svg>
<svg style="left:1904px;top:76px;" width="6" height="6" viewBox="0 0 6 6"><path d="M0 0 L6 6 M6 0 L0 6" stroke="#d0d0d0" stroke-width="1.8"/></svg>
<div class="a" style="left:1625px;top:83px;width:126px;height:98px;background:#535353;border:1px solid #333333;border-top:1px solid #383838;"></div>
<svg style="left:1678px;top:87px;" width="20" height="4" viewBox="0 0 20 4"><rect x="0" y="0" width="1" height="4" fill="#383838"/><rect x="2" y="0" width="1" height="4" fill="#383838"/><rect x="4" y="0" width="1" height="4" fill="#383838"/><rect x="6" y="0" width="1" height="4" fill="#383838"/><rect x="8" y="0" width="1" height="4" fill="#383838"/><rect x="10" y="0" width="1" height="4" fill="#383838"/><rect x="12" y="0" width="1" height="4" fill="#383838"/><rect x="14" y="0" width="1" height="4" fill="#383838"/><rect x="16" y="0" width="1" height="4" fill="#383838"/><rect x="18" y="0" width="1" height="4" fill="#383838"/></svg>
<svg style="left:1636px;top:103px;" width="20" height="10" viewBox="0 0 20 10"><rect x="0.8" y="1" width="11" height="8" rx="4" fill="none" stroke="#c8c8c8" stroke-width="1.6"/><rect x="7.5" y="1" width="11" height="8" rx="4" fill="none" stroke="#c8c8c8" stroke-width="1.6"/></svg>
<div class="t" style="left:1663.00px;top:102.53px;font-size:10px;color:#e2e2e2;font-weight:400;transform:scaleX(1.0281);transform-origin:0 0;">Links</div>
<svg style="left:1637px;top:127px;" width="17" height="17" viewBox="0 0 17 17"><rect x="0.5" y="0.5" width="13" height="13.5" fill="none" stroke="#c8c8c8" stroke-width="1"/><rect x="3" y="3" width="13" height="13.5" fill="#535353" stroke="#c8c8c8" stroke-width="1"/><path d="M9 3 V9 L10.5 7.5 L12 9 V3 Z" fill="#c8c8c8"/></svg>
<div class="t" style="left:1663.00px;top:130.53px;font-size:10px;color:#e2e2e2;font-weight:400;transform:scaleX(1.0170);transform-origin:0 0;">Libraries</div>
<svg style="left:1638px;top:154px;" width="15" height="18" viewBox="0 0 15 18"><path d="M0 0 H9 L14 5 V18 H0 Z" fill="#c8c8c8"/><path d="M9.5 0 L14 4.5 H9.5 Z" fill="#535353"/><circle cx="7" cy="11.5" r="4.3" fill="#535353"/><rect x="6.2" y="10.3" width="1.6" height="4" fill="#c8c8c8"/><rect x="6.2" y="8.2" width="1.6" height="1.5" fill="#c8c8c8"/></svg>
<div class="t" style="left:1663.00px;top:158.53px;font-size:10px;color:#e2e2e2;font-weight:400;transform:scaleX(1.0764);transform-origin:0 0;">Document Info</div>
<div class="a" style="left:1751px;top:83px;width:40px;height:318px;background:#3a3a3a;"></div>
<div class="a" style="left:1752px;top:84px;width:37px;height:40px;background:#535353;"></div>
<svg style="left:1762px;top:88px;" width="20" height="4" viewBox="0 0 20 4"><rect x="0" y="0" width="1" height="4" fill="#383838"/><rect x="2" y="0" width="1" height="4" fill="#383838"/><rect x="4" y="0" width="1" height="4" fill="#383838"/><rect x="6" y="0" width="1" height="4" fill="#383838"/><rect x="8" y="0" width="1" height="4" fill="#383838"/><rect x="10" y="0" width="1" height="4" fill="#383838"/><rect x="12" y="0" width="1" height="4" fill="#383838"/><rect x="14" y="0" width="1" height="4" fill="#383838"/><rect x="16" y="0" width="1" height="4" fill="#383838"/><rect x="18" y="0" width="1" height="4" fill="#383838"/></svg>
<div class="a" style="left:1752px;top:126px;width:37px;height:95px;background:#535353;"></div>
<svg style="left:1762px;top:130px;" width="20" height="4" viewBox="0 0 20 4"><rect x="0" y="0" width="1" height="4" fill="#383838"/><rect x="2" y="0" width="1" height="4" fill="#383838"/><rect x="4" y="0" width="1" height="4" fill="#383838"/><rect x="6" y="0" width="1" height="4" fill="#383838"/><rect x="8" y="0" width="1" height="4" fill="#383838"/><rect x="10" y="0" width="1" height="4" fill="#383838"/><rect x="12" y="0" width="1" height="4" fill="#383838"/><rect x="14" y="0" width="1" height="4" fill="#383838"/><rect x="16" y="0" width="1" height="4" fill="#383838"/><rect x="18" y="0" width="1" height="4" fill="#383838"/></svg>
<div class="a" style="left:1752px;top:223px;width:37px;height:39px;background:#535353;"></div>
<svg style="left:1762px;top:227px;" width="20" height="4" viewBox="0 0 20 4"><rect x="0" y="0" width="1" height="4" fill="#383838"/><rect x="2" y="0" width="1" height="4" fill="#383838"/><rect x="4" y="0" width="1" height="4" fill="#383838"/><rect x="6" y="0" width="1" height="4" fill="#383838"/><rect x="8" y="0" width="1" height="4" fill="#383838"/><rect x="10" y="0" width="1" height="4" fill="#383838"/><rect x="12" y="0" width="1" height="4" fill="#383838"/><rect x="14" y="0" width="1" height="4" fill="#383838"/><rect x="16" y="0" width="1" height="4" fill="#383838"/><rect x="18" y="0" width="1" height="4" fill="#383838"/></svg>
<div class="a" style="left:1752px;top:264px;width:37px;height:67px;background:#535353;"></div>
<svg style="left:1762px;top:268px;" width="20" height="4" viewBox="0 0 20 4"><rect x="0" y="0" width="1" height="4" fill="#383838"/><rect x="2" y="0" width="1" height="4" fill="#383838"/><rect x="4" y="0" width="1" height="4" fill="#383838"/><rect x="6" y="0" width="1" height="4" fill="#383838"/><rect x="8" y="0" width="1" height="4" fill="#383838"/><rect x="10" y="0" width="1" height="4" fill="#383838"/><rect x="12" y="0" width="1" height="4" fill="#383838"/><rect x="14" y="0" width="1" height="4" fill="#383838"/><rect x="16" y="0" width="1" height="4" fill="#383838"/><rect x="18" y="0" width="1" height="4" fill="#383838"/></svg>
<div class="a" style="left:1752px;top:333px;width:37px;height:67px;background:#535353;"></div>
<svg style="left:1762px;top:337px;" width="20" height="4" viewBox="0 0 20 4"><rect x="0" y="0" width="1" height="4" fill="#383838"/><rect x="2" y="0" width="1" height="4" fill="#383838"/><rect x="4" y="0" width="1" height="4" fill="#383838"/><rect x="6" y="0" width="1" height="4" fill="#383838"/><rect x="8" y="0" width="1" height="4" fill="#383838"/><rect x="10" y="0" width="1" height="4" fill="#383838"/><rect x="12" y="0" width="1" height="4" fill="#383838"/><rect x="14" y="0" width="1" height="4" fill="#383838"/><rect x="16" y="0" width="1" height="4" fill="#383838"/><rect x="18" y="0" width="1" height="4" fill="#383838"/></svg>
<div class="a" style="left:1751px;top:400px;width:40px;height:27px;background:#5e5e5e;"></div>
<svg style="left:1762px;top:100px;" width="18" height="17" viewBox="0 0 18 17"><rect x="5.5" y="0.5" width="12" height="12" fill="none" stroke="#c8c8c8" stroke-width="1.2"/><rect x="0.5" y="8" width="6" height="6" fill="#535353" stroke="#c8c8c8" stroke-width="1.2"/><rect x="3.5" y="11" width="6" height="6" fill="#c8c8c8"/></svg>
<svg style="left:1763px;top:140px;" width="16" height="17" viewBox="0 0 16 17"><rect x="2" y="2" width="12" height="13" fill="none" stroke="#c8c8c8" stroke-width="1.2"/><rect x="0" y="0" width="3.5" height="3.5" fill="#c8c8c8"/><rect x="12.5" y="0" width="3.5" height="3.5" fill="#c8c8c8"/><rect x="0" y="13.5" width="3.5" height="3.5" fill="#c8c8c8"/><rect x="12.5" y="13.5" width="3.5" height="3.5" fill="#c8c8c8"/><rect x="6.5" y="0" width="3" height="3" fill="#c8c8c8"/><rect x="6.5" y="14" width="3" height="3" fill="#c8c8c8"/><rect x="0" y="7" width="3" height="3" fill="#c8c8c8"/><rect x="13" y="7" width="3" height="3" fill="#c8c8c8"/><circle cx="8" cy="8.5" r="0.8" fill="#c8c8c8"/></svg>
<svg style="left:1763px;top:166px;" width="16" height="19" viewBox="0 0 16 19"><rect x="0" y="0" width="1.3" height="19" fill="#c8c8c8"/><rect x="2.5" y="3" width="8" height="5" fill="#c8c8c8"/><rect x="2.5" y="10" width="13" height="5" fill="#c8c8c8"/></svg>
<svg style="left:1763px;top:196px;" width="16" height="18" viewBox="0 0 16 18"><rect x="0" y="0" width="9" height="9" fill="#c8c8c8"/><rect x="6" y="7" width="10" height="10" fill="#c8c8c8"/><rect x="6" y="7" width="3" height="2" fill="#888"/><rect x="3" y="5" width="4" height="4" fill="#888"/></svg>
<svg style="left:1763px;top:235px;" width="16" height="19" viewBox="0 0 16 19"><rect x="3.5" y="10" width="9" height="8.5" rx="1" fill="#c8c8c8"/><path d="M5 10 L2 3 M8 10 L8 1 M11 10 L13 4" stroke="#c8c8c8" stroke-width="1.4"/><ellipse cx="2.2" cy="4" rx="2" ry="3.2" fill="#c8c8c8"/><ellipse cx="8" cy="2.5" rx="1.6" ry="2.5" fill="#c8c8c8"/><ellipse cx="13.3" cy="5" rx="2.6" ry="1.8" fill="#c8c8c8"/></svg>
<div class="a" style="left:1757px;top:275px;width:27px;height:22px;background:#393939;border:1px solid #5a5a5a;border-radius:3px;"></div>
<svg style="left:1761px;top:278px;" width="19" height="17" viewBox="0 0 19 17"><path d="M9.5 1 L18 6.5 L9.5 12 L1 6.5 Z" fill="#cdcdcd"/><path d="M1 9.5 L9.5 15 L18 9.5 L16 8.3 L9.5 12.6 L3 8.3 Z" fill="#cdcdcd"/></svg>
<svg style="left:1762px;top:305px;" width="19" height="19" viewBox="0 0 19 19"><rect x="0.5" y="0.5" width="10.5" height="11.5" fill="none" stroke="#c8c8c8" stroke-width="1.2"/><rect x="5.5" y="7" width="12.5" height="10.5" fill="#535353" stroke="#c8c8c8" stroke-width="1.2"/></svg>
<div class="a" style="left:1762px;top:348px;width:18px;height:14px;border:1.2px solid #d8d8d8;background:linear-gradient(90deg,#222,#eee)"></div>
<svg style="left:1761px;top:374px;" width="20" height="20" viewBox="0 0 20 20"><circle cx="7.5" cy="7.5" r="7" fill="#c8c8c8"/><circle cx="11.5" cy="11.5" r="7" fill="#6a6a6a" stroke="#bdbdbd" stroke-width="1.2"/></svg>
<div class="a" style="left:1791px;top:83px;width:125px;height:387px;background:#3a3a3a;"></div>
<div class="a" style="left:1792px;top:84px;width:123px;height:40px;background:#535353;"></div>
<svg style="left:1844px;top:88px;" width="20" height="4" viewBox="0 0 20 4"><rect x="0" y="0" width="1" height="4" fill="#383838"/><rect x="2" y="0" width="1" height="4" fill="#383838"/><rect x="4" y="0" width="1" height="4" fill="#383838"/><rect x="6" y="0" width="1" height="4" fill="#383838"/><rect x="8" y="0" width="1" height="4" fill="#383838"/><rect x="10" y="0" width="1" height="4" fill="#383838"/><rect x="12" y="0" width="1" height="4" fill="#383838"/><rect x="14" y="0" width="1" height="4" fill="#383838"/><rect x="16" y="0" width="1" height="4" fill="#383838"/><rect x="18" y="0" width="1" height="4" fill="#383838"/></svg>
<div class="a" style="left:1792px;top:126px;width:123px;height:95px;background:#535353;"></div>
<svg style="left:1844px;top:130px;" width="20" height="4" viewBox="0 0 20 4"><rect x="0" y="0" width="1" height="4" fill="#383838"/><rect x="2" y="0" width="1" height="4" fill="#383838"/><rect x="4" y="0" width="1" height="4" fill="#383838"/><rect x="6" y="0" width="1" height="4" fill="#383838"/><rect x="8" y="0" width="1" height="4" fill="#383838"/><rect x="10" y="0" width="1" height="4" fill="#383838"/><rect x="12" y="0" width="1" height="4" fill="#383838"/><rect x="14" y="0" width="1" height="4" fill="#383838"/><rect x="16" y="0" width="1" height="4" fill="#383838"/><rect x="18" y="0" width="1" height="4" fill="#383838"/></svg>
<div class="a" style="left:1792px;top:222px;width:123px;height:96px;background:#535353;"></div>
<svg style="left:1844px;top:226px;" width="20" height="4" viewBox="0 0 20 4"><rect x="0" y="0" width="1" height="4" fill="#383838"/><rect x="2" y="0" width="1" height="4" fill="#383838"/><rect x="4" y="0" width="1" height="4" fill="#383838"/><rect x="6" y="0" width="1" height="4" fill="#383838"/><rect x="8" y="0" width="1" height="4" fill="#383838"/><rect x="10" y="0" width="1" height="4" fill="#383838"/><rect x="12" y="0" width="1" height="4" fill="#383838"/><rect x="14" y="0" width="1" height="4" fill="#383838"/><rect x="16" y="0" width="1" height="4" fill="#383838"/><rect x="18" y="0" width="1" height="4" fill="#383838"/></svg>
<div class="a" style="left:1792px;top:320px;width:123px;height:39px;background:#535353;"></div>
<svg style="left:1844px;top:324px;" width="20" height="4" viewBox="0 0 20 4"><rect x="0" y="0" width="1" height="4" fill="#383838"/><rect x="2" y="0" width="1" height="4" fill="#383838"/><rect x="4" y="0" width="1" height="4" fill="#383838"/><rect x="6" y="0" width="1" height="4" fill="#383838"/><rect x="8" y="0" width="1" height="4" fill="#383838"/><rect x="10" y="0" width="1" height="4" fill="#383838"/><rect x="12" y="0" width="1" height="4" fill="#383838"/><rect x="14" y="0" width="1" height="4" fill="#383838"/><rect x="16" y="0" width="1" height="4" fill="#383838"/><rect x="18" y="0" width="1" height="4" fill="#383838"/></svg>
<div class="a" style="left:1792px;top:361px;width:123px;height:67px;background:#535353;"></div>
<svg style="left:1844px;top:365px;" width="20" height="4" viewBox="0 0 20 4"><rect x="0" y="0" width="1" height="4" fill="#383838"/><rect x="2" y="0" width="1" height="4" fill="#383838"/><rect x="4" y="0" width="1" height="4" fill="#383838"/><rect x="6" y="0" width="1" height="4" fill="#383838"/><rect x="8" y="0" width="1" height="4" fill="#383838"/><rect x="10" y="0" width="1" height="4" fill="#383838"/><rect x="12" y="0" width="1" height="4" fill="#383838"/><rect x="14" y="0" width="1" height="4" fill="#383838"/><rect x="16" y="0" width="1" height="4" fill="#383838"/><rect x="18" y="0" width="1" height="4" fill="#383838"/></svg>
<div class="a" style="left:1792px;top:430px;width:123px;height:39px;background:#535353;"></div>
<svg style="left:1844px;top:434px;" width="20" height="4" viewBox="0 0 20 4"><rect x="0" y="0" width="1" height="4" fill="#383838"/><rect x="2" y="0" width="1" height="4" fill="#383838"/><rect x="4" y="0" width="1" height="4" fill="#383838"/><rect x="6" y="0" width="1" height="4" fill="#383838"/><rect x="8" y="0" width="1" height="4" fill="#383838"/><rect x="10" y="0" width="1" height="4" fill="#383838"/><rect x="12" y="0" width="1" height="4" fill="#383838"/><rect x="14" y="0" width="1" height="4" fill="#383838"/><rect x="16" y="0" width="1" height="4" fill="#383838"/><rect x="18" y="0" width="1" height="4" fill="#383838"/></svg>
<div class="a" style="left:1916px;top:83px;width:4px;height:387px;background:#4a4a4a;"></div>
<svg style="left:1806px;top:101px;" width="13" height="14" viewBox="0 0 13 14"><path d="M0 0 L12.5 7 L0 14 Z" fill="#c8c8c8"/></svg>
<div class="t" style="left:1829.00px;top:103.53px;font-size:10px;color:#e2e2e2;font-weight:400;transform:scaleX(1.1283);transform-origin:0 0;">Actions</div>
<svg style="left:1803px;top:139px;" width="20" height="20" viewBox="0 0 20 20"><circle cx="6" cy="13" r="4.3" fill="none" stroke="#c8c8c8" stroke-width="2.6" stroke-dasharray="2 1.2"/><circle cx="6" cy="13" r="3" fill="none" stroke="#c8c8c8" stroke-width="1.4"/><circle cx="15" cy="4.5" r="3" fill="none" stroke="#c8c8c8" stroke-width="2" stroke-dasharray="1.6 1"/><circle cx="15" cy="4.5" r="2" fill="none" stroke="#c8c8c8" stroke-width="1"/></svg>
<div class="t" style="left:1829.00px;top:144.53px;font-size:10px;color:#e2e2e2;font-weight:400;transform:scaleX(1.0502);transform-origin:0 0;">Variables</div>
<svg style="left:1803px;top:168px;" width="19" height="19" viewBox="0 0 19 19"><circle cx="9" cy="9" r="8.2" fill="none" stroke="#c8c8c8" stroke-width="1" stroke-dasharray="1.5 1.5"/><circle cx="9" cy="9" r="6.2" fill="#c8c8c8"/></svg>
<div class="t" style="left:1829.00px;top:172.53px;font-size:10px;color:#e2e2e2;font-weight:400;transform:scaleX(1.0199);transform-origin:0 0;">Appearance</div>
<svg style="left:1803px;top:195px;" width="19" height="19" viewBox="0 0 19 19"><path d="M8 3.5 H1 V18 H15 V11" fill="none" stroke="#c8c8c8" stroke-width="1.6"/><path d="M8 11 L17 2 M11 1.5 H17.5 V8" fill="none" stroke="#c8c8c8" stroke-width="1.6"/></svg>
<div class="t" style="left:1829.00px;top:200.53px;font-size:10px;color:#e2e2e2;font-weight:400;">Asset Export</div>
<div class="t" style="left:1803.00px;top:238.61px;font-size:17px;color:#c8c8c8;font-weight:400;transform:scaleX(1.0583);transform-origin:0 0;">A</div>
<div class="a" style="left:1817px;top:237px;width:1px;height:17px;background:#c8c8c8;"></div>
<div class="t" style="left:1829.00px;top:239.53px;font-size:10px;color:#e2e2e2;font-weight:400;transform:scaleX(1.0478);transform-origin:0 0;">Character</div>
<div class="t" style="left:1805.00px;top:265.76px;font-size:18px;color:#c8c8c8;font-weight:700;transform:scaleX(1.0988);transform-origin:0 0;">¶</div>
<div class="t" style="left:1829.00px;top:267.54px;font-size:10px;color:#e2e2e2;font-weight:400;transform:scaleX(1.0279);transform-origin:0 0;">Paragraph</div>
<div class="t" style="left:1803.00px;top:293.07px;font-size:20px;color:#bdbdbd;font-weight:400;transform:scaleX(0.8357);transform-origin:0 0;font-family:Liberation Serif,serif;font-style:italic;">O</div>
<div class="t" style="left:1829.00px;top:295.54px;font-size:10px;color:#e2e2e2;font-weight:400;transform:scaleX(1.0620);transform-origin:0 0;">OpenType</div>
<div class="t" style="left:1804.00px;top:334.07px;font-size:20px;color:#bdbdbd;font-weight:400;transform:scaleX(1.0494);transform-origin:0 0;font-family:Liberation Serif,serif;font-style:italic;">A</div>
<div class="t" style="left:1829.00px;top:336.54px;font-size:10px;color:#e2e2e2;font-weight:400;transform:scaleX(1.1246);transform-origin:0 0;">Glyphs</div>
<svg style="left:1803px;top:375px;" width="20" height="16" viewBox="0 0 20 16"><path d="M9 0.5 Q19 0 19 6 Q19 9 15 9 Q12 9 13.5 12 Q14 15.5 8 15.5 Q0 15 0.5 8 Q1 1 9 0.5 Z" fill="#c8c8c8"/><circle cx="5" cy="6" r="1.5" fill="#535353"/><circle cx="9" cy="4" r="1.5" fill="#535353"/><circle cx="4" cy="10.5" r="1.5" fill="#535353"/><circle cx="8.5" cy="12" r="1.3" fill="#535353"/><circle cx="14.5" cy="5" r="1.3" fill="#535353"/></svg>
<div class="t" style="left:1829.00px;top:377.54px;font-size:10px;color:#e2e2e2;font-weight:400;transform:scaleX(1.1299);transform-origin:0 0;">Color</div>
<svg style="left:1804px;top:403px;" width="17" height="18" viewBox="0 0 17 18"><defs><linearGradient id="cg" x1="0" y1="0" x2="1" y2="1"><stop offset="0" stop-color="#222"/><stop offset="1" stop-color="#ddd"/></linearGradient></defs><path d="M1 1 Q14 5 16 17 H1 Z" fill="url(#cg)" stroke="#d0d0d0" stroke-width="1"/></svg>
<div class="t" style="left:1829.00px;top:405.54px;font-size:10px;color:#e2e2e2;font-weight:400;transform:scaleX(1.0495);transform-origin:0 0;">Color Guide</div>
<div class="a" style="left:1797px;top:440px;width:113px;height:23px;background:#393939;border:1px solid #5a5a5a;border-radius:3px;"></div>
<svg style="left:1804px;top:446px;" width="17" height="12" viewBox="0 0 17 12"><rect x="0" y="0" width="16" height="1.6" fill="#d0d0d0"/><rect x="0" y="4.5" width="16" height="2.2" fill="#d0d0d0"/><rect x="0" y="9" width="16" height="3" fill="#d0d0d0"/></svg>
<div class="t" style="left:1829.00px;top:446.54px;font-size:10px;color:#f0f0f0;font-weight:400;transform:scaleX(1.0727);transform-origin:0 0;">Stroke</div>
<div class="a" style="left:1559px;top:428px;width:232px;height:348px;background:#535353;border:1px solid #333333;"></div>
<div class="a" style="left:1560px;top:429px;width:230px;height:28px;background:#424242;"></div>
<div class="a" style="left:1560px;top:456px;width:230px;height:1px;background:#383838;"></div>
<svg style="left:1751px;top:440px;" width="8" height="7" viewBox="0 0 8 7"><path d="M0.5 0.5 L3.5 3.5 L0.5 6.5 M4.5 0.5 L7.5 3.5 L4.5 6.5" fill="none" stroke="#d0d0d0" stroke-width="1.1"/></svg>
<div class="a" style="left:1766px;top:438px;width:1px;height:12px;background:#c8c8c8;"></div>
<svg style="left:1774px;top:439px;" width="11" height="9" viewBox="0 0 11 9"><path d="M0 0.75 H11 M0 4.5 H11 M0 8.25 H11" stroke="#d0d0d0" stroke-width="1.3"/></svg>
<div class="t" style="left:1587.60px;top:469.54px;font-size:10px;color:#dadada;font-weight:400;">Weight:</div>
<div class="a" style="left:1626px;top:464px;width:86px;height:19px;background:#484848;border:1px solid #4c4c4c;border-radius:3px;"></div>
<svg style="left:1630px;top:466px;" width="10" height="15" viewBox="0 0 10 15"><path d="M1 4.5 L5 1 L9 4.5 M1 10.5 L5 14 L9 10.5" fill="none" stroke="#f0f0f0" stroke-width="1.3"/></svg>
<div class="a" style="left:1644px;top:465px;width:50px;height:17px;background:#444444;"></div>
<div class="t" style="left:1647.00px;top:469.04px;font-size:10px;color:#eaeaea;font-weight:400;transform:scaleX(1.0793);transform-origin:0 0;">0.5 pt</div>
<div class="a" style="left:1694px;top:465px;width:1px;height:17px;background:#4a4a4a;"></div>
<svg style="left:1698px;top:470.5px;" width="9" height="6" viewBox="0 0 9 6"><path d="M1 1 L4.5 5 L8 1" fill="none" stroke="#f0f0f0" stroke-width="1.4"/></svg>
<div class="t" style="left:1601.00px;top:495.54px;font-size:10px;color:#dadada;font-weight:400;transform:scaleX(0.9469);transform-origin:0 0;">Cap:</div>
<div class="a" style="left:1626px;top:489px;width:66px;height:21px;background:#4f4f4f;border:1px solid #4a4a4a;border-radius:3px;"></div>
<svg style="left:1630px;top:493px" width="14" height="13"><rect x="4" y="0" width="10" height="13" fill="#c6c6c6"/><rect x="2" y="5.5" width="9" height="2" fill="#3a3a3a"/><circle cx="2.5" cy="6.5" r="1.7" fill="none" stroke="#c6c6c6" stroke-width="1"/></svg>
<div class="a" style="left:1648px;top:489px;width:22px;height:21px;background:#2e2e2e;"></div>
<svg style="left:1652px;top:493px" width="14" height="13"><path d="M6.5 0 H14 V13 H6.5 A6.5 6.5 0 0 1 6.5 0 Z" fill="#ffffff"/><rect x="5" y="5.5" width="9" height="2" fill="#2e2e2e"/><circle cx="5.5" cy="6.5" r="1.5" fill="#2e2e2e"/></svg>
<div class="a" style="left:1670px;top:490px;width:1px;height:19px;background:#494949;"></div>
<svg style="left:1674px;top:493px" width="14" height="13"><rect x="0" y="0" width="14" height="13" fill="#c6c6c6"/><rect x="3" y="5.5" width="11" height="2" fill="#4f4f4f"/></svg>
<div class="t" style="left:1588.60px;top:522.53px;font-size:10px;color:#dadada;font-weight:400;transform:scaleX(0.9717);transform-origin:0 0;">Corner:</div>
<div class="a" style="left:1626px;top:516px;width:66px;height:21px;background:#4f4f4f;border:1px solid #4a4a4a;border-radius:3px;"></div>
<div class="a" style="left:1626px;top:516px;width:22px;height:21px;background:#2e2e2e;"></div>
<svg style="left:1630px;top:520px" width="14" height="13"><path d="M0 0 H14 V6 H7 V13 H0 Z" fill="#ffffff"/><path d="M5 5 H14 V13 H8 V8 H5 Z" fill="#ffffff"/><path d="M4 4.5 H10 M4.5 4 V12" stroke="#2e2e2e" stroke-width="1.5"/></svg>
<div class="a" style="left:1648px;top:517px;width:1px;height:19px;background:#494949;"></div>
<svg style="left:1652px;top:520px" width="14" height="13"><path d="M6 0 H14 V6 H8 Q6 6 6 8 V13 H0 V6 Q0 0 6 0 Z" fill="#c6c6c6"/><rect x="8" y="7" width="6" height="6" fill="#c6c6c6"/></svg>
<div class="a" style="left:1670px;top:517px;width:1px;height:19px;background:#494949;"></div>
<svg style="left:1674px;top:520px" width="14" height="13"><path d="M5 0 H14 V6 H8 L6 8 V13 H0 V5 Z" fill="#c6c6c6"/><rect x="8" y="7" width="6" height="6" fill="#c6c6c6"/></svg>
<div class="t" style="left:1709.50px;top:522.53px;font-size:10px;color:#dadada;font-weight:400;transform:scaleX(1.0255);transform-origin:0 0;">Limit:</div>
<div class="a" style="left:1738px;top:516px;width:38px;height:21px;background:#3e3e3e;border:1px solid #4a4a4a;border-radius:3px;"></div>
<div class="t" style="left:1743.00px;top:521.53px;font-size:10px;color:#eaeaea;font-weight:400;">4</div>
<div class="t" style="left:1780.00px;top:522.53px;font-size:10px;color:#dadada;font-weight:400;">x</div>
<div class="t" style="left:1565.30px;top:549.53px;font-size:10px;color:#dadada;font-weight:400;transform:scaleX(0.9825);transform-origin:0 0;">Align Stroke:</div>
<div class="a" style="left:1626px;top:543px;width:66px;height:21px;background:#4f4f4f;border:1px solid #4a4a4a;border-radius:3px;"></div>
<div class="a" style="left:1626px;top:543px;width:22px;height:21px;background:#2e2e2e;"></div>
<svg style="left:1630px;top:547px" width="14" height="13"><path d="M0 0 H5 V8 H14 V13 H0 Z" fill="#ffffff"/><path d="M2.5 0 V10.5 H14" stroke="#2e2e2e" stroke-width="1.3" fill="none"/><rect x="7" y="3" width="7" height="4" fill="#ffffff"/></svg>
<div class="a" style="left:1648px;top:544px;width:1px;height:19px;background:#494949;"></div>
<svg style="left:1652px;top:547px" width="14" height="13"><path d="M3 0 H7 V7 H14 V12 H3 Z" fill="#c6c6c6"/><path d="M1.5 1 V13 H13" stroke="#c6c6c6" stroke-width="1" fill="none"/></svg>
<div class="a" style="left:1670px;top:544px;width:1px;height:19px;background:#494949;"></div>
<svg style="left:1674px;top:547px" width="14" height="13"><path d="M0 0 H5 V7 H14 V13 H0 Z" fill="#c6c6c6"/><path d="M2 0 V10 H14" stroke="#4f4f4f" stroke-width="1" fill="none"/></svg>
<div class="a" style="left:1565px;top:571px;width:220px;height:1px;background:#464646;"></div>
<div class="a" style="left:1566px;top:582px;width:12px;height:12px;background:none;border:1px solid #d0d0d0;border-radius:1px;"></div>
<div class="t" style="left:1583.00px;top:582.53px;font-size:10px;color:#e6e6e6;font-weight:400;transform:scaleX(0.9617);transform-origin:0 0;">Dashed Line</div>
<div class="a" style="left:1708px;top:577px;width:77px;height:21px;background:none;border:1px solid #5e5e5e;border-radius:3px;"></div>
<div class="a" style="left:1746px;top:578px;width:1px;height:19px;background:#5e5e5e;"></div>
<svg style="left:1712px;top:581px;" width="70" height="14" viewBox="0 0 70 14"><rect x="2" y="1" width="8" height="2" fill="#6c6c6c"/><rect x="14" y="1" width="8" height="2" fill="#6c6c6c"/><rect x="27" y="1" width="2" height="5" fill="#6c6c6c"/><rect x="1" y="6.5" width="2" height="6" fill="#6c6c6c"/><rect x="8" y="11" width="7.5" height="2" fill="#6c6c6c"/><rect x="20.5" y="11" width="7.5" height="2" fill="#6c6c6c"/><rect x="40" y="1.5" width="5" height="2" fill="#6c6c6c"/><rect x="40" y="1.5" width="2" height="5" fill="#6c6c6c"/><rect x="50" y="1.5" width="8" height="2" fill="#6c6c6c"/><rect x="63" y="1.5" width="5" height="2" fill="#6c6c6c"/><rect x="66" y="1.5" width="2" height="5" fill="#6c6c6c"/><rect x="40" y="7" width="2" height="5" fill="#6c6c6c"/><rect x="40" y="10.5" width="5" height="2" fill="#6c6c6c"/><rect x="50" y="10.5" width="8" height="2" fill="#6c6c6c"/><rect x="63" y="10.5" width="5" height="2" fill="#6c6c6c"/><rect x="66" y="7" width="2" height="5" fill="#6c6c6c"/></svg>
<div class="a" style="left:1565px;top:604px;width:34px;height:21px;background:#575757;border-radius:3px;"></div>
<div class="t" style="left:1571.16px;top:628.03px;font-size:10px;color:#6a6a6a;font-weight:400;-webkit-text-stroke:0.2px currentColor;">dash</div>
<div class="a" style="left:1602px;top:604px;width:34px;height:21px;background:#575757;border-radius:3px;"></div>
<div class="t" style="left:1610.66px;top:628.03px;font-size:10px;color:#6a6a6a;font-weight:400;-webkit-text-stroke:0.2px currentColor;">gap</div>
<div class="a" style="left:1639px;top:604px;width:34px;height:21px;background:#575757;border-radius:3px;"></div>
<div class="t" style="left:1645.16px;top:628.03px;font-size:10px;color:#6a6a6a;font-weight:400;-webkit-text-stroke:0.2px currentColor;">dash</div>
<div class="a" style="left:1676px;top:604px;width:34px;height:21px;background:#575757;border-radius:3px;"></div>
<div class="t" style="left:1684.66px;top:628.03px;font-size:10px;color:#6a6a6a;font-weight:400;-webkit-text-stroke:0.2px currentColor;">gap</div>
<div class="a" style="left:1713px;top:604px;width:34px;height:21px;background:#575757;border-radius:3px;"></div>
<div class="t" style="left:1719.16px;top:628.03px;font-size:10px;color:#6a6a6a;font-weight:400;-webkit-text-stroke:0.2px currentColor;">dash</div>
<div class="a" style="left:1750px;top:604px;width:34px;height:21px;background:#575757;border-radius:3px;"></div>
<div class="t" style="left:1758.66px;top:628.03px;font-size:10px;color:#6a6a6a;font-weight:400;-webkit-text-stroke:0.2px currentColor;">gap</div>
<div class="a" style="left:1565px;top:647px;width:220px;height:1px;background:#464646;"></div>
<div class="t" style="left:1566.00px;top:660.53px;font-size:10px;color:#dadada;font-weight:400;transform:scaleX(0.9798);transform-origin:0 0;">Arrowheads:</div>
<div class="a" style="left:1626px;top:655px;width:55px;height:19px;background:#484848;border:1px solid #4c4c4c;border-radius:3px;"></div>
<div class="a" style="left:1626px;top:655px;width:37px;height:19px;background:#e4e4e4;"></div>
<div class="a" style="left:1631px;top:663px;width:27px;height:2.5px;background:#000;"></div>
<svg style="left:1666px;top:660.5px;" width="9" height="6" viewBox="0 0 9 6"><path d="M1 1 L4.5 5 L8 1" fill="none" stroke="#f0f0f0" stroke-width="1.4"/></svg>
<div class="a" style="left:1689px;top:655px;width:55px;height:19px;background:#484848;border:1px solid #4c4c4c;border-radius:3px;"></div>
<div class="a" style="left:1689px;top:655px;width:37px;height:19px;background:#e4e4e4;"></div>
<div class="a" style="left:1694px;top:663px;width:27px;height:2.5px;background:#000;"></div>
<svg style="left:1729px;top:660.5px;" width="9" height="6" viewBox="0 0 9 6"><path d="M1 1 L4.5 5 L8 1" fill="none" stroke="#f0f0f0" stroke-width="1.4"/></svg>
<svg style="left:1766px;top:659px;" width="15" height="11" viewBox="0 0 15 11"><path d="M1 3 H13 M10 0.5 L13.5 3 L10 5.5 M14 8 H2 M5 5.5 L1.5 8 L5 10.5" fill="none" stroke="#6e6e6e" stroke-width="1.6"/></svg>
<div class="t" style="left:1595.00px;top:690.53px;font-size:10px;color:#6e6e6e;font-weight:400;transform:scaleX(0.9355);transform-origin:0 0;">Scale:</div>
<div class="a" style="left:1626px;top:685px;width:56px;height:20px;background:#575757;border:1px solid #5a5a5a;border-radius:3px;"></div>
<div class="a" style="left:1644px;top:686px;width:1px;height:18px;background:#5e5e5e;"></div>
<svg style="left:1630px;top:687px;" width="10" height="15" viewBox="0 0 10 15"><path d="M1 4.5 L5 1 L9 4.5 M1 10.5 L5 14 L9 10.5" fill="none" stroke="#6e6e6e" stroke-width="1.2"/></svg>
<div class="t" style="left:1647.00px;top:690.53px;font-size:10px;color:#6e6e6e;font-weight:400;transform:scaleX(0.9384);transform-origin:0 0;">100%</div>
<div class="a" style="left:1689px;top:685px;width:56px;height:20px;background:#575757;border:1px solid #5a5a5a;border-radius:3px;"></div>
<div class="a" style="left:1707px;top:686px;width:1px;height:18px;background:#5e5e5e;"></div>
<svg style="left:1693px;top:687px;" width="10" height="15" viewBox="0 0 10 15"><path d="M1 4.5 L5 1 L9 4.5 M1 10.5 L5 14 L9 10.5" fill="none" stroke="#6e6e6e" stroke-width="1.2"/></svg>
<div class="t" style="left:1710.00px;top:690.53px;font-size:10px;color:#6e6e6e;font-weight:400;transform:scaleX(0.9384);transform-origin:0 0;">100%</div>
<svg style="left:1764px;top:687px;" width="17" height="17" viewBox="0 0 17 17"><path d="M8 1 Q11 1 11 4 V7 M8 16 Q5 16 5 13 V10" fill="none" stroke="#6a6a6a" stroke-width="1.5"/><path d="M1 1 L16 16" stroke="#6a6a6a" stroke-width="1.3"/><path d="M5 4 Q5 1 8 1 M11 13 Q11 16 8 16" fill="none" stroke="#6a6a6a" stroke-width="1.5"/></svg>
<div class="t" style="left:1596.00px;top:719.53px;font-size:10px;color:#6e6e6e;font-weight:400;">Align:</div>
<div class="a" style="left:1626px;top:713px;width:44px;height:21px;background:none;border:1px solid #5e5e5e;border-radius:3px;"></div>
<div class="a" style="left:1648px;top:714px;width:1px;height:19px;background:#5e5e5e;"></div>
<svg style="left:1630px;top:718px;" width="14" height="11" viewBox="0 0 14 11"><path d="M0 1.5 H7 M7 0 V3 M0 7 H9 M8 4 L13 7 L8 10 Z" fill="none" stroke="#6e6e6e" stroke-width="1.4"/></svg>
<svg style="left:1652px;top:718px;" width="14" height="11" viewBox="0 0 14 11"><path d="M0 1.5 H13 M13 0 V3 M0 7 H9 M8 4 L13 7 L8 10 Z" fill="none" stroke="#6e6e6e" stroke-width="1.4"/></svg>
<div class="a" style="left:1565px;top:741px;width:220px;height:1px;background:#464646;"></div>
<div class="t" style="left:1591.00px;top:754.53px;font-size:10px;color:#e6e6e6;font-weight:400;transform:scaleX(0.9640);transform-origin:0 0;">Profile:</div>
<div class="a" style="left:1626px;top:749px;width:105px;height:19px;background:#484848;border:1px solid #4c4c4c;border-radius:3px;"></div>
<div class="a" style="left:1626px;top:749px;width:87px;height:19px;background:#e4e4e4;"></div>
<div class="a" style="left:1632px;top:758px;width:38px;height:3px;background:#000;"></div>
<div class="t" style="left:1674.00px;top:755.53px;font-size:10px;color:#102040;font-weight:400;">Uniform</div>
<svg style="left:1717px;top:754.5px;" width="9" height="6" viewBox="0 0 9 6"><path d="M1 1 L4.5 5 L8 1" fill="none" stroke="#f0f0f0" stroke-width="1.4"/></svg>
<svg style="left:1742px;top:758px;" width="14" height="11" viewBox="0 0 14 11"><path d="M0.5 0.5 L5 5.5 L0.5 10.5 Z" fill="none" stroke="#6a6a6a" stroke-width="1"/><path d="M13.5 0.5 L9 5.5 L13.5 10.5 Z" fill="#6a6a6a"/><path d="M7 0 V11" stroke="#6a6a6a" stroke-width="0.8" stroke-dasharray="1 1"/></svg>
<svg style="left:1767px;top:757px;" width="12" height="13" viewBox="0 0 12 13"><path d="M1 0.5 H11 L6 5.5 Z" fill="#6a6a6a"/><path d="M1 12.5 H11 L6 7.5 Z" fill="none" stroke="#6a6a6a" stroke-width="1"/><path d="M0 6.5 H12" stroke="#6a6a6a" stroke-width="0.8" stroke-dasharray="1 1"/></svg>
<div class="a" style="left:1519px;top:260px;width:232px;height:193px;background:#535353;border:1px solid #333333;"></div>
<div class="a" style="left:1520px;top:260px;width:230px;height:4px;background:#3a3a3a;"></div>
<div class="a" style="left:1520px;top:264px;width:230px;height:27px;background:#424242;"></div>
<div class="a" style="left:1520px;top:264px;width:47px;height:27px;background:#535353;"></div>
<div class="a" style="left:1567px;top:264px;width:65px;height:27px;background:#464646;border-right:1px solid #3d3d3d;"></div>
<div class="t" style="left:1529.00px;top:272.04px;font-size:10px;color:#f0f0f0;font-weight:400;transform:scaleX(0.9329);transform-origin:0 0;">Layers</div>
<div class="t" style="left:1576.00px;top:272.04px;font-size:10px;color:#b8b8b8;font-weight:400;transform:scaleX(1.0611);transform-origin:0 0;">Artboards</div>
<svg style="left:1709px;top:273px;" width="11" height="9" viewBox="0 0 11 9"><path d="M0.5 0.5 L4.5 4.5 L0.5 8.5 M5.5 0.5 L9.5 4.5 L5.5 8.5" fill="none" stroke="#d0d0d0" stroke-width="1.1"/></svg>
<div class="a" style="left:1726px;top:271px;width:1px;height:12px;background:#c8c8c8;"></div>
<svg style="left:1734px;top:273px;" width="11" height="9" viewBox="0 0 11 9"><path d="M0 0.75 H11 M0 4.5 H11 M0 8.25 H11" stroke="#d0d0d0" stroke-width="1.3"/></svg>
<div class="a" style="left:1525px;top:297px;width:220px;height:128px;background:none;border:1px solid #5a5a5a;border-radius:3px;"></div>
<div class="a" style="left:1526px;top:298px;width:218px;height:20px;background:#4b5c7a;"></div>
<div class="a" style="left:1526px;top:318px;width:218px;height:1px;background:#4a4a4a;"></div>
<div class="a" style="left:1546px;top:298px;width:1px;height:20px;background:#4a4a4a;"></div>
<div class="a" style="left:1567px;top:298px;width:1px;height:20px;background:#4a4a4a;"></div>
<div class="a" style="left:1573px;top:298px;width:1px;height:20px;background:#4a4a4a;"></div>
<div class="a" style="left:1708px;top:298px;width:1px;height:20px;background:#4a4a4a;"></div>
<div class="a" style="left:1569px;top:299px;width:3px;height:18px;background:#f0506e;"></div>
<svg style="left:1580px;top:303px;" width="6" height="10" viewBox="0 0 6 10"><path d="M1 1 L5 5.0 L1 9" fill="none" stroke="#e8e8e8" stroke-width="1.3"/></svg>
<div class="a" style="left:1598px;top:299px;width:18px;height:17px;background:#ffffff;border:1px solid #000;"></div>
<div class="t" style="left:1621.00px;top:302.69px;font-size:11px;color:#f0f0f0;font-weight:400;transform:scaleX(0.8995);transform-origin:0 0;">Layer 2</div>
<svg style="left:1714px;top:303px;" width="10" height="10" viewBox="0 0 10 10"><circle cx="5" cy="5" r="4.2" fill="none" stroke="#e0e0e0" stroke-width="1.1"/></svg>
<div class="a" style="left:1526px;top:338px;width:218px;height:1px;background:#4a4a4a;"></div>
<div class="a" style="left:1546px;top:318px;width:1px;height:20px;background:#4a4a4a;"></div>
<div class="a" style="left:1567px;top:318px;width:1px;height:20px;background:#4a4a4a;"></div>
<div class="a" style="left:1573px;top:318px;width:1px;height:20px;background:#4a4a4a;"></div>
<div class="a" style="left:1708px;top:318px;width:1px;height:20px;background:#4a4a4a;"></div>
<div class="a" style="left:1569px;top:319px;width:3px;height:18px;background:#4cba4c;"></div>
<svg style="left:1580px;top:323px;" width="6" height="10" viewBox="0 0 6 10"><path d="M1 1 L5 5.0 L1 9" fill="none" stroke="#e8e8e8" stroke-width="1.3"/></svg>
<div class="a" style="left:1598px;top:319px;width:18px;height:17px;background:#ffffff;border:1px solid #000;"></div>
<div class="t" style="left:1621.00px;top:322.69px;font-size:11px;color:#f0f0f0;font-weight:400;transform:scaleX(0.8995);transform-origin:0 0;">Layer 3</div>
<svg style="left:1714px;top:323px;" width="10" height="10" viewBox="0 0 10 10"><circle cx="5" cy="5" r="4.2" fill="none" stroke="#e0e0e0" stroke-width="1.1"/></svg>
<div class="a" style="left:1526px;top:359px;width:218px;height:1px;background:#4a4a4a;"></div>
<div class="a" style="left:1546px;top:339px;width:1px;height:20px;background:#4a4a4a;"></div>
<div class="a" style="left:1567px;top:339px;width:1px;height:20px;background:#4a4a4a;"></div>
<div class="a" style="left:1573px;top:339px;width:1px;height:20px;background:#4a4a4a;"></div>
<div class="a" style="left:1708px;top:339px;width:1px;height:20px;background:#4a4a4a;"></div>
<div class="a" style="left:1569px;top:340px;width:3px;height:18px;background:#3d9be9;"></div>
<svg style="left:1580px;top:344px;" width="6" height="10" viewBox="0 0 6 10"><path d="M1 1 L5 5.0 L1 9" fill="none" stroke="#e8e8e8" stroke-width="1.3"/></svg>
<div class="a" style="left:1598px;top:340px;width:18px;height:17px;background:#ffffff;border:1px solid #000;"></div>
<div class="t" style="left:1621.00px;top:343.69px;font-size:11px;color:#f0f0f0;font-weight:400;transform:scaleX(0.8995);transform-origin:0 0;">Layer 1</div>
<svg style="left:1714px;top:344px;" width="10" height="10" viewBox="0 0 10 10"><circle cx="5" cy="5" r="4.2" fill="none" stroke="#e0e0e0" stroke-width="1.1"/></svg>
<svg style="left:1600px;top:301px;" width="15" height="12" viewBox="0 0 15 12"><path d="M1 1 Q4 0 7 1 L7 5 Q4 6 2 5 Z" fill="#e8195a"/><path d="M7 2 H13 V6 H8 Z" fill="#2b93d1"/><rect x="1" y="8" width="13" height="1" fill="#2b93d1"/><rect x="8" y="8" width="6" height="1" fill="#e8195a"/><rect x="4" y="10" width="7" height="1" fill="#333"/></svg>
<svg style="left:1600px;top:322px;" width="15" height="12" viewBox="0 0 15 12"><path d="M1 2 Q4 0 8 1 L8 7 Q4 9 1 6 Z" fill="#e8195a"/><path d="M8 3 H14 V9 H9 Z" fill="#2b93d1"/></svg>
<svg style="left:1600px;top:343px;" width="15" height="12" viewBox="0 0 15 12"><rect x="0" y="3" width="7" height="5" fill="#000"/><rect x="2" y="3" width="2" height="1" fill="#e8195a"/><rect x="10" y="3" width="1" height="6" fill="#888"/></svg>
<svg style="left:1527px;top:303px;" width="18" height="10" viewBox="0 0 18 10"><path d="M1 5 Q9 -2 17 5 Q9 12 1 5 Z" fill="#cfcfcf"/><circle cx="9" cy="5" r="2.6" fill="#4b5c7a"/><circle cx="9" cy="5" r="1.2" fill="#cfcfcf"/></svg>
<div class="a" style="left:1740px;top:298px;width:4px;height:4px;background:none;"></div>
<svg style="left:1738px;top:298px;" width="6" height="6" viewBox="0 0 6 6"><path d="M0 0 H6 V6 Z" fill="#d8d8d8"/></svg>
<div class="t" style="left:1525.00px;top:429.54px;font-size:10px;color:#aeb6c4;font-weight:400;transform:scaleX(0.9648);transform-origin:0 0;">3 Layers</div>
<svg style="left:1581px;top:428px;" width="13" height="13" viewBox="0 0 13 13"><path d="M6 2 H1 V12 H11 V7" fill="none" stroke="#c8c8c8" stroke-width="1.3"/><path d="M5 8 L12 1 M8 0.8 H12.3 V5" fill="none" stroke="#c8c8c8" stroke-width="1.3"/></svg>
<svg style="left:1607px;top:428px;" width="13" height="14" viewBox="0 0 13 14"><circle cx="5" cy="5" r="4" fill="none" stroke="#777" stroke-width="1.4"/><path d="M8 8 L12 12" stroke="#777" stroke-width="2"/></svg>
<svg style="left:1633px;top:429px;" width="12" height="12" viewBox="0 0 12 12"><rect x="0.5" y="0.5" width="8" height="8" fill="none" stroke="#c8c8c8" stroke-width="1"/><rect x="3.5" y="3.5" width="8" height="8" fill="none" stroke="#9a9a9a" stroke-width="1"/><rect x="2" y="2" width="5.5" height="5.5" fill="#c8c8c8"/></svg>
<svg style="left:1657px;top:428px;" width="16" height="13" viewBox="0 0 16 13"><path d="M1 0 V5 H5 M3.5 3 L5.5 5 L3.5 7" fill="none" stroke="#c8c8c8" stroke-width="1.2"/><rect x="6.5" y="2.5" width="9" height="9.5" fill="none" stroke="#c8c8c8" stroke-width="1.1"/><path d="M11 4.5 V10 M8.3 7.3 H13.7" stroke="#c8c8c8" stroke-width="1.2"/></svg>
<svg style="left:1686px;top:429px;" width="12" height="12" viewBox="0 0 12 12"><rect x="0.5" y="0.5" width="11" height="11" fill="none" stroke="#c8c8c8" stroke-width="1.1"/><path d="M6 3 V9 M3 6 H9" stroke="#c8c8c8" stroke-width="1.2"/></svg>
<svg style="left:1711px;top:428px;" width="11" height="14" viewBox="0 0 11 14"><path d="M0 2.5 H11 M3.5 2.5 V0.8 H7.5 V2.5" fill="none" stroke="#c8c8c8" stroke-width="1.1"/><path d="M1.5 3.5 V13 H9.5 V3.5 M4 5 V11.5 M5.5 5 V11.5 M7 5 V11.5" fill="none" stroke="#c8c8c8" stroke-width="1.1"/></svg>
<div class="a" style="left:1520px;top:444px;width:230px;height:8px;background:#4e4e4e;border-top:1px solid #3a3a3a;"></div>
<svg style="left:1625px;top:446px;" width="20" height="4" viewBox="0 0 20 4"><rect x="0" y="0" width="1" height="4" fill="#383838"/><rect x="2" y="0" width="1" height="4" fill="#383838"/><rect x="4" y="0" width="1" height="4" fill="#383838"/><rect x="6" y="0" width="1" height="4" fill="#383838"/><rect x="8" y="0" width="1" height="4" fill="#383838"/><rect x="10" y="0" width="1" height="4" fill="#383838"/><rect x="12" y="0" width="1" height="4" fill="#383838"/><rect x="14" y="0" width="1" height="4" fill="#383838"/><rect x="16" y="0" width="1" height="4" fill="#383838"/><rect x="18" y="0" width="1" height="4" fill="#383838"/></svg>
</body></html>
